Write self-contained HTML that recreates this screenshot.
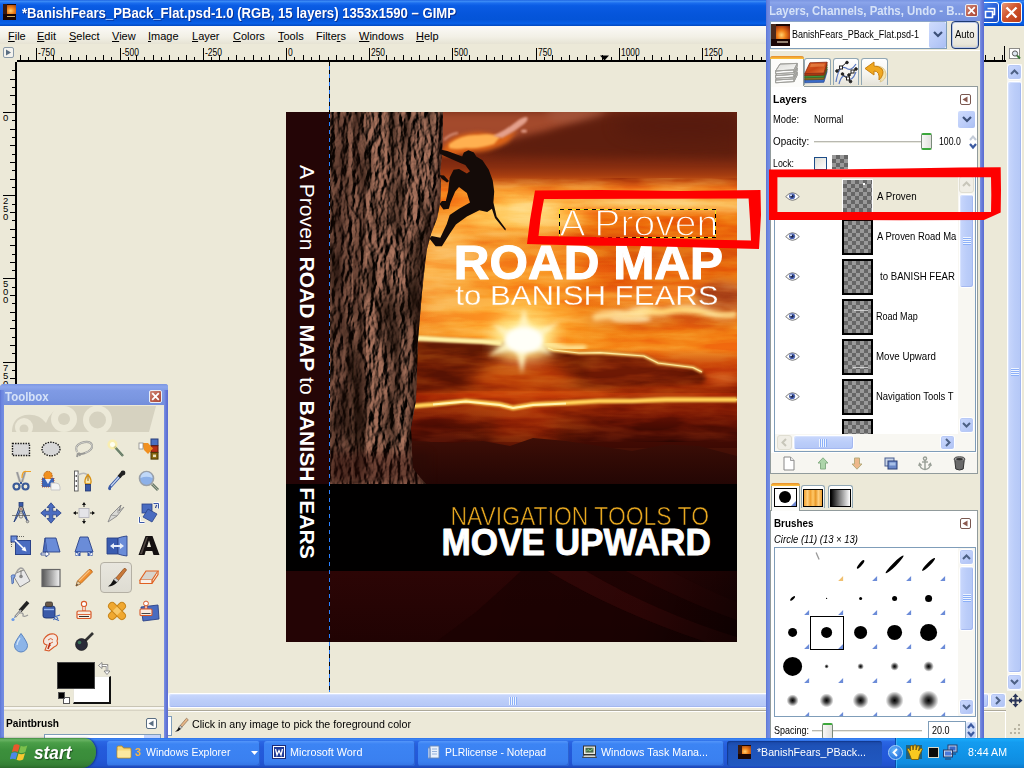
<!DOCTYPE html>
<html>
<head>
<meta charset="utf-8">
<title>GIMP</title>
<style>
*{box-sizing:border-box;margin:0;padding:0}
html,body{width:1024px;height:768px;overflow:hidden;background:#ECE9D8;font-family:"Liberation Sans",sans-serif;font-size:11px;color:#000}
#root{position:absolute;left:0;top:0;width:1024px;height:768px;overflow:hidden;background:#ECE9D8}
.abs{position:absolute}
.t{position:absolute;white-space:nowrap;line-height:1}
/* ---------- main title bar ---------- */
#mtitle{left:0;top:0;width:1024px;height:26px;background:linear-gradient(#1C62E0 0%,#3C8CF6 5%,#1A6CEE 12%,#0A5CE4 22%,#0656DC 50%,#0454D8 75%,#0860E8 90%,#0348BE 100%)}
#mtitle .t{left:22px;top:6px;color:#fff;font-weight:bold;font-size:14px;text-shadow:1px 1px 0 #0A2F8E}
/* ---------- menu bar ---------- */
#menubar{left:0;top:26px;width:766px;height:18px;background:linear-gradient(#FBFAF7,#F2F0E6 60%,#E6E3D4)}
#menubar .t{top:5px;font-size:11px}
#menubar u{text-decoration:underline}
/* ---------- rulers ---------- */
#hruler{left:17px;top:44px;width:990px;height:18px;background:#ECE9D8}
#vruler{left:0;top:62px;width:17px;height:631px;background:#ECE9D8}
/* ---------- canvas ---------- */
#canvas{left:17px;top:62px;width:990px;height:631px;background:#ECE9D8}

.sbtn{background:linear-gradient(135deg,#CCDAFD,#BACBF8 60%,#AEC2F4);border:1px solid #fff;border-radius:3px;box-shadow:inset 0 0 0 1px #B8C9F6}
.sthumb{border:1px solid #fff;border-radius:3px;box-shadow:inset -1px -1px 0 #A4B8F0, inset 1px 1px 0 #D6E2FE}
</style>
</head>
<body>
<div id="root">

<!-- MAIN WINDOW -->
<div id="mtitle" class="abs"><div class="t" style="transform:scaleX(0.9373);transform-origin:0 0">*BanishFears_PBack_Flat.psd-1.0 (RGB, 15 layers) 1353x1590 – GIMP</div></div>
<div id="menubar" class="abs">
  <div class="t" style="left:8px"><u>F</u>ile</div>
  <div class="t" style="left:37px"><u>E</u>dit</div>
  <div class="t" style="left:69px"><u>S</u>elect</div>
  <div class="t" style="left:112px"><u>V</u>iew</div>
  <div class="t" style="left:148px"><u>I</u>mage</div>
  <div class="t" style="left:192px"><u>L</u>ayer</div>
  <div class="t" style="left:233px"><u>C</u>olors</div>
  <div class="t" style="left:278px"><u>T</u>ools</div>
  <div class="t" style="left:316px">Filte<u>r</u>s</div>
  <div class="t" style="left:359px"><u>W</u>indows</div>
  <div class="t" style="left:416px"><u>H</u>elp</div>
</div>
<div id="hruler" class="abs"></div>
<div id="vruler" class="abs"></div>
<div id="canvas" class="abs"></div>

<!-- BOOK COVER -->
<svg class="abs" style="left:286px;top:112px" width="451" height="530" viewBox="0 0 451 530">
<defs>
  <linearGradient id="sky" x1="0" y1="0" x2="0" y2="372" gradientUnits="userSpaceOnUse">
    <stop offset="0" stop-color="#742A16"/>
    <stop offset="0.07" stop-color="#64200F"/>
    <stop offset="0.10" stop-color="#6A220E"/>
    <stop offset="0.129" stop-color="#7A2810"/>
    <stop offset="0.148" stop-color="#882E10"/>
    <stop offset="0.169" stop-color="#A43C10"/>
    <stop offset="0.188" stop-color="#C85412"/>
    <stop offset="0.202" stop-color="#EC7E1E"/>
    <stop offset="0.215" stop-color="#F68C22"/>
    <stop offset="0.25" stop-color="#F48016"/>
    <stop offset="0.30" stop-color="#EE700C"/>
    <stop offset="0.40" stop-color="#E6600A"/>
    <stop offset="0.50" stop-color="#E8640A"/>
    <stop offset="0.58" stop-color="#F07A10"/>
    <stop offset="0.64" stop-color="#F68618"/>
    <stop offset="0.70" stop-color="#D8580C"/>
    <stop offset="0.745" stop-color="#B44208"/>
    <stop offset="0.775" stop-color="#A83808"/>
    <stop offset="0.80" stop-color="#9A2E07"/>
    <stop offset="0.84" stop-color="#741E06"/>
    <stop offset="0.88" stop-color="#4E1206"/>
    <stop offset="1" stop-color="#2E0A06"/>
  </linearGradient>
  <linearGradient id="lowmul" x1="0" y1="236" x2="0" y2="336" gradientUnits="userSpaceOnUse">
    <stop offset="0" stop-color="#FFFFFF"/>
    <stop offset="0.12" stop-color="#E8B8A0"/>
    <stop offset="0.5" stop-color="#E0A088"/>
    <stop offset="1" stop-color="#D89078"/>
  </linearGradient>
  <linearGradient id="mtn" x1="0" y1="326" x2="0" y2="372" gradientUnits="userSpaceOnUse">
    <stop offset="0" stop-color="#3E0E06"/>
    <stop offset="0.5" stop-color="#300A05"/>
    <stop offset="1" stop-color="#240604"/>
  </linearGradient>
  <radialGradient id="sun" cx="238" cy="228" r="120" gradientUnits="userSpaceOnUse">
    <stop offset="0" stop-color="#FFFFF0"/>
    <stop offset="0.10" stop-color="#FFF6C0"/>
    <stop offset="0.18" stop-color="#FFD060" stop-opacity="0.95"/>
    <stop offset="0.4" stop-color="#FFA020" stop-opacity="0.55"/>
    <stop offset="1" stop-color="#F08010" stop-opacity="0"/>
  </radialGradient>
  <linearGradient id="low" x1="0" y1="459" x2="0" y2="530" gradientUnits="userSpaceOnUse">
    <stop offset="0" stop-color="#2C0505"/>
    <stop offset="1" stop-color="#200303"/>
  </linearGradient>
  <linearGradient id="lowshade" x1="200" y1="459" x2="451" y2="530" gradientUnits="userSpaceOnUse">
    <stop offset="0" stop-color="#000" stop-opacity="0"/>
    <stop offset="0.6" stop-color="#000" stop-opacity="0.1"/>
    <stop offset="1" stop-color="#000" stop-opacity="0.55"/>
  </linearGradient>
  <filter color-interpolation-filters="sRGB" id="b2" x="-20%" y="-20%" width="140%" height="140%"><feGaussianBlur stdDeviation="2"/></filter>
  <filter color-interpolation-filters="sRGB" id="b4" x="-20%" y="-50%" width="140%" height="200%"><feGaussianBlur stdDeviation="4"/></filter>
  <filter color-interpolation-filters="sRGB" id="b16" x="-30%" y="-50%" width="160%" height="200%"><feGaussianBlur stdDeviation="16"/></filter>
  <filter color-interpolation-filters="sRGB" id="b8" x="-20%" y="-50%" width="140%" height="200%"><feGaussianBlur stdDeviation="8"/></filter>
  <filter color-interpolation-filters="sRGB" id="b1" x="-5%" y="-50%" width="110%" height="200%"><feGaussianBlur stdDeviation="0.8"/></filter>
  <filter color-interpolation-filters="sRGB" id="rock" x="0" y="0" width="100%" height="100%">
    <feTurbulence type="fractalNoise" baseFrequency="0.17 0.07" numOctaves="5" seed="4" result="n"/>
    <feDiffuseLighting in="n" surfaceScale="4.6" diffuseConstant="1.32" lighting-color="#8E6250" result="lit">
      <feDistantLight azimuth="200" elevation="40"/>
    </feDiffuseLighting>
    <feTurbulence type="fractalNoise" baseFrequency="0.05 0.012" numOctaves="3" seed="9" result="n2"/>
    <feColorMatrix in="n2" type="matrix" values="0 0 0 0 0.08  0 0 0 0 0.04  0 0 0 0 0.02  2.2 0 0 0 -1.0" result="cr"/>
    <feMerge><feMergeNode in="lit"/><feMergeNode in="cr"/></feMerge>
    <feComposite in2="SourceGraphic" operator="in"/>
  </filter>
  <filter color-interpolation-filters="sRGB" id="skynoise" x="0" y="0" width="100%" height="100%">
    <feTurbulence type="fractalNoise" baseFrequency="0.014 0.075" numOctaves="4" seed="23" result="n"/>
    <feColorMatrix in="n" type="matrix" values="2.4 0 0 0 -0.7  2.4 0 0 0 -0.7  2.4 0 0 0 -0.7  0 0 0 0 1"/>
  </filter>
  <filter color-interpolation-filters="sRGB" id="thin"><feMorphology operator="erode" radius="0.45"/></filter>
  <clipPath id="skyclip"><rect x="43" y="0" width="408" height="372"/></clipPath>
  <clipPath id="rockclip"><path d="M43 0 L157 0 L156.7 28 L155.9 43 L154.3 59 L155 75 L154.3 90 L151.2 106 L145 122 L141 137 L139.5 148 L136 180 L132 228 L130 288 L125 316 L126 340 L127 356 L133 364 L140 372 L43 372Z"/></clipPath>
  <clipPath id="lowclip"><rect x="0" y="459" width="451" height="71"/></clipPath>
</defs>
<!-- spine -->
<rect x="0" y="0" width="451" height="530" fill="#240506"/>
<!-- sky -->
<g clip-path="url(#skyclip)">
  <rect x="43" y="0" width="408" height="372" fill="url(#sky)"/>
  <!-- top-left lighter haze -->
  <path d="M43 0 H330 L300 8 L258 22 L214 32 L150 40 L43 40Z" fill="#A64C2E" opacity="0.95" filter="url(#b4)"/>
  <ellipse cx="290" cy="2" rx="30" ry="10" fill="#A85A40" opacity="0.7" filter="url(#b4)"/>
  <!-- dark cloud mass from right -->
  <path d="M451 -4 L320 2 L262 20 L236 26 L214 34 L196 42 L451 46Z" fill="#5E1E0E" opacity="0.9" filter="url(#b4)"/>
  <ellipse cx="400" cy="14" rx="70" ry="14" fill="#54190E" opacity="0.7" filter="url(#b8)"/>
  <!-- top cloud streak -->
  <path d="M156 38 Q164 24 180 22 Q196 18 212 24 Q222 22 232 18 L222 30 Q206 40 186 40 Q170 44 156 44Z" fill="#DC6418" filter="url(#b2)"/>
  <path d="M163 32 Q176 22 192 23 Q206 21 214 25 L208 32 Q194 37 180 36 Q170 38 163 36Z" fill="#FFB050" filter="url(#b1)"/>
  <path d="M158 28 Q164 22 172 21" stroke="#D89078" stroke-width="2.2" fill="none" filter="url(#b1)"/>
  <path d="M207 24 Q220 18 230 10 Q236 5 241 5 Q243 8 238 12 Q228 20 216 26Z" fill="#E4A08C" filter="url(#b1)"/>
  <ellipse cx="238" cy="19" rx="3" ry="1.6" fill="#E4A08C" filter="url(#b1)"/>
  <!-- bright band -->
  <ellipse cx="235" cy="100" rx="70" ry="17" fill="#FFB640" opacity="0.95" filter="url(#b8)"/>
  <ellipse cx="225" cy="104" rx="40" ry="9" fill="#FFD070" opacity="0.8" filter="url(#b4)"/>
  <ellipse cx="160" cy="118" rx="36" ry="13" fill="#FFBC50" opacity="0.75" filter="url(#b8)"/>
  <ellipse cx="380" cy="92" rx="100" ry="6" fill="#FFD878" opacity="0.95" filter="url(#b4)"/>
  <ellipse cx="390" cy="142" rx="80" ry="6" fill="#D2500C" opacity="0.7" filter="url(#b4)"/>
  <ellipse cx="300" cy="126" rx="70" ry="5" fill="#DC5A0C" opacity="0.5" filter="url(#b4)"/>
  <ellipse cx="170" cy="160" rx="50" ry="12" fill="#FFA432" opacity="0.7" filter="url(#b8)"/>
  <ellipse cx="380" cy="184" rx="80" ry="9" fill="#FBA63C" opacity="0.75" filter="url(#b4)"/>
  <ellipse cx="300" cy="160" rx="120" ry="6" fill="#F88C20" opacity="0.5" filter="url(#b4)"/>
  <ellipse cx="195" cy="165" rx="105" ry="62" fill="#FFB440" opacity="0.55" filter="url(#b16)"/>
  <ellipse cx="160" cy="160" rx="30" ry="40" fill="#FFD070" opacity="0.5" filter="url(#b8)"/>
  <ellipse cx="215" cy="205" rx="80" ry="22" fill="#FFCC60" opacity="0.5" filter="url(#b8)"/>
  <ellipse cx="236" cy="104" rx="52" ry="20" fill="#FFCC60" opacity="0.75" filter="url(#b8)"/>
  <ellipse cx="250" cy="96" rx="28" ry="8" fill="#FFE090" opacity="0.6" filter="url(#b4)"/>
  <!-- right clouds near sun -->
  <ellipse cx="436" cy="186" rx="26" ry="17" fill="#B04A1E" opacity="0.85" filter="url(#b4)"/>
  <path d="M300 206 Q330 196 362 200 Q392 190 420 196 Q440 200 451 198 L451 214 Q420 216 392 212 Q360 218 330 214 Q312 216 300 212Z" fill="#D86C20" opacity="0.7" filter="url(#b4)"/>
  <path d="M306 203 Q320 196 340 199 Q356 192 376 196 Q398 190 420 197 Q438 202 451 199 L451 205 Q436 208 420 204 Q398 199 378 204 Q356 204 340 207 Q322 206 308 209Z" fill="#FFE090" filter="url(#b2)"/>
  <ellipse cx="345" cy="206" rx="20" ry="5" fill="#FFE8A8" opacity="0.8" filter="url(#b2)"/>
  <!-- sun glow -->
  <rect x="43" y="100" width="408" height="272" fill="url(#sun)"/>
  <!-- dark cloud band 1 (below rim path) -->
  <path d="M43 228 L132 226 L164 228 L197 229.5 L214 231 L238 226 L267 238 L293 241 L314 240.6 L358 244 L372 251 L407 255.5 L418 262 Q424 268 414 272 L330 275 L238 279 L130 279 L43 280Z" fill="#7C2806" filter="url(#b2)"/>
  <path d="M176 276 Q210 240 238 232 Q266 240 300 276 L238 288Z" fill="#F07A12" opacity="0.8" filter="url(#b8)"/>
  <path d="M300 246 L360 248 L400 258 L410 268 L300 272Z" fill="#A8400E" opacity="0.55" filter="url(#b4)"/>
  <ellipse cx="436" cy="266" rx="14" ry="7" fill="#F89838" opacity="0.7" filter="url(#b4)"/>
  <path d="M43 258 L130 256 L130 278 L43 278Z" fill="#6A2006" opacity="0.6" filter="url(#b8)"/>
  <!-- rim 1 -->
  <!-- glow band between clouds -->
  <path d="M43 288 Q240 280 451 283" stroke="#D8560C" stroke-width="5" fill="none" opacity="0.85" filter="url(#b2)"/>
  <path d="M170 284 Q240 279 320 282" stroke="#F07814" stroke-width="8" fill="none" opacity="0.8" filter="url(#b4)"/>
  <path d="M215 292 L262 292 L275 330 L205 330Z" fill="#D04A0A" opacity="0.45" filter="url(#b8)"/>
  <!-- rim 2 -->
  <rect x="43" y="66" width="408" height="264" filter="url(#skynoise)" style="mix-blend-mode:soft-light" opacity="0.42"/>
  <rect x="43" y="236" width="408" height="100" fill="url(#lowmul)" style="mix-blend-mode:multiply"/>
  <path d="M43 227 L132 226 L164 228 L197 229.5 L214 231" stroke="#FFEC98" stroke-width="3" fill="none" filter="url(#b1)"/>
  <path d="M43 227 L132 226 L164 228 L197 229.5 L214 231" stroke="#FFF8C8" stroke-width="1.4" fill="none" opacity="0.95"/>
  <path d="M258 232 L280 236 L300 236" stroke="#FFF0A8" stroke-width="5" fill="none" filter="url(#b2)"/>
  <path d="M262 236 L267 238 L293 241 L314 240.6 L358 244 L372 251 L407 255.5 L416 260" stroke="#FFD870" stroke-width="2.6" fill="none" filter="url(#b1)"/>
  <path d="M262 236 L267 238 L293 241 L314 240.6 L358 244 L372 251 L407 255.5 L416 260" stroke="#FFF0A8" stroke-width="1.2" fill="none" opacity="0.9"/>
  <path d="M43 295 L129 294 L147 292.5 L180 289 L214 292.5 L227 296 L247 292.5 L280 291 L313 289 L346 289 L380 287.6 L413 287.6 L451 287.6" stroke="#FFD468" stroke-width="3.2" fill="none" filter="url(#b1)"/>
  <path d="M43 295 L129 294 L147 292.5 L180 289 L214 292.5 L227 296 L247 292.5 L280 291 L313 289 L346 289 L380 287.6 L413 287.6 L451 287.6" stroke="#FFEFA0" stroke-width="1.3" fill="none" opacity="0.9"/>
  <path d="M43 295 L129 294 L147 292.5 L180 289 L214 292.5 L227 296 L247 292.5 L280 291 L313 289 L346 289 L380 287.6 L413 287.6 L451 287.6" stroke="#FFC848" stroke-width="4.6" fill="none" opacity="0.8" filter="url(#b1)"/>
  <path d="M147 292.5 L180 289.5 L214 293 L227 296 L247 293 L280 291.5" stroke="#FFF4B0" stroke-width="2" fill="none"/>
  <path d="M120 226 L164 228 L197 229.5 L216 231" stroke="#FFF0A0" stroke-width="5" fill="none" opacity="0.9" filter="url(#b1)"/>
  <!-- sun core -->
  <ellipse cx="238" cy="228" rx="30" ry="20" fill="#FFF0A0" opacity="0.9" filter="url(#b8)"/>
  <path d="M238 196 L245 220 L274 210 L252 228 L266 242 L241 237 L236 262 L230 237 L202 244 L223 228 L206 212 L231 221Z" fill="#FFF4C0" opacity="0.95" filter="url(#b2)"/>
  <ellipse cx="238" cy="228" rx="19" ry="13" fill="#FFFFF8" filter="url(#b2)"/>
  <!-- mountains -->
  <path d="M43 330 L127 329 L164 331 L197 329 L224 334 L247 326 L280 329 L313 334 L346 339 L380 332.5 L413 334 L451 344 L451 372 L43 372Z" fill="url(#mtn)"/>
</g>
<!-- rock -->
<g filter="url(#rock)">
  <path d="M43 0 L157 0 L156.7 28 L155.9 43 L154.3 59 L155 75 L154.3 90 L151.2 106 L145 122 L141 137 L139.5 148 L136 180 L132 228 L130 288 L125 316 L126 340 L127 356 L133 364 L140 372 L43 372Z" fill="#67402F"/>
</g>
<path d="M43 0 L157 0 L156.7 28 L155.9 43 L154.3 59 L155 75 L154.3 90 L151.2 106 L145 122 L141 137 L139.5 148 L136 180 L132 228 L130 288 L125 316 L126 340 L127 356 L133 364 L140 372 L43 372Z" fill="#200A04" opacity="0.10"/>
<g clip-path="url(#rockclip)"><path d="M72 0 Q66 30 74 60 Q82 95 74 130 Q66 170 74 210 Q80 260 72 372" stroke="#1C0C06" stroke-width="9" fill="none" opacity="0.55" filter="url(#b4)"/><rect x="43" y="0" width="22" height="372" fill="#1C0A06" opacity="0.35" filter="url(#b4)"/><path d="M157 0 L156.7 28 L155.9 43 L154.3 59 L155 75 L154.3 90 L151.2 106 L145 122 L141 137 L139.5 148 L136 180 L132 228 L130 288 L125 316 L126 340" stroke="#1A0A06" stroke-width="8" fill="none" opacity="0.5" filter="url(#b2)"/></g>
<rect x="43" y="340" width="100" height="32" fill="#2A0A06" opacity="0.45" filter="url(#b4)"/>
<!-- climber -->
<path d="M154.3 37.4 L161.3 38.9 L176.2 44.4 L177.8 40.5 L182.4 38.2 L187.9 40.5 L190.3 44.4 L196.5 48.3 L202.8 57.7 L206.7 68.6 L208.2 79.6 L207.4 90.5 L210.6 104.6 L219.9 117.1 L219.2 118.6 L209 106.1 L205.9 96.8 L201.2 99.9 L193.4 98.3 L180.9 104.6 L169.9 112.4 L163.7 121.8 L155.9 134.3 L149.6 134.3 L143.4 126.4 L145.7 124.1 L154.3 125.7 L160.6 112.4 L163.7 103 L173 96.8 L184 90.5 L180.9 81.1 L173 74.9 L169.2 79.6 L164.5 90.5 L162.9 96.8 L157.4 97.5 L153.5 92.1 L155.9 88.9 L159.8 88.9 L162.1 79.6 L163.7 65.5 L167.6 57.7 L173 56.9 L180.9 61.6 L184 59.3 L179.3 53 L173.8 50.7 L157.4 43.6 L153.5 41.3Z" fill="#140B08"/>
<path d="M153 63 L158 63.5 L163 69 L161 70.5 L156 67Z" fill="#140B08"/>
<!-- black band -->
<rect x="0" y="372" width="451" height="87" fill="#010000"/>
<!-- lower -->
<rect x="0" y="459" width="451" height="71" fill="url(#low)"/>
<g clip-path="url(#lowclip)">
  <path d="M150 530 L190 500 Q215 478 235 459 L262 459 Q330 500 420 530Z" fill="#1C0303" opacity="0.8"/>
  <path d="M262 459 L300 459 Q370 500 451 525 L451 530 L420 530 Q330 500 262 459Z" fill="#330707" opacity="0.8"/>
  <path d="M300 459 L340 459 Q400 490 451 508 L451 525 Q370 500 300 459Z" fill="#1E0303" opacity="0.8"/>
  <path d="M340 459 L385 459 Q420 478 451 490 L451 508 Q400 490 340 459Z" fill="#300606" opacity="0.8"/>
  <rect x="0" y="459" width="451" height="71" fill="url(#lowshade)"/>
</g>
<rect x="0" y="0" width="43" height="372" fill="#240506"/>
<rect x="0" y="459" width="43" height="71" fill="#240405"/>
<!-- text -->
<g font-family="Liberation Sans, sans-serif" fill="#fff">
  <mask id="mthin" maskUnits="userSpaceOnUse" x="260" y="85" width="190" height="55"><text x="273.60" y="124.4" font-size="37.2" textLength="158.55" lengthAdjust="spacingAndGlyphs" fill="#fff" stroke="#000" stroke-width="1.3">A Proven</text></mask>
  <rect x="260" y="85" width="190" height="55" fill="#fff" mask="url(#mthin)"/>
  <text x="167.80" y="166.6" font-size="47.5" font-weight="bold" textLength="269.23" lengthAdjust="spacingAndGlyphs" stroke="#fff" stroke-width="1.1" stroke-linejoin="round">ROAD MAP</text>
  <mask id="mthin2" maskUnits="userSpaceOnUse" x="160" y="165" width="285" height="40"><text x="169.30" y="193.2" font-size="27.6" textLength="263.23" lengthAdjust="spacingAndGlyphs" fill="#fff" stroke="#000" stroke-width="0.3">to BANISH FEARS</text></mask>
  <rect x="160" y="165" width="285" height="40" fill="#fff" mask="url(#mthin2)"/>
  <mask id="mthin3" maskUnits="userSpaceOnUse" x="155" y="388" width="280" height="32"><text x="164.40" y="412.9" font-size="25.2" textLength="258.64" lengthAdjust="spacingAndGlyphs" fill="#fff" stroke="#000" stroke-width="0.6">NAVIGATION TOOLS TO</text></mask>
  <rect x="155" y="388" width="280" height="32" fill="#E9A820" mask="url(#mthin3)"/>
  <text x="155.60" y="443.3" font-size="36.2" font-weight="bold" textLength="269.24" lengthAdjust="spacingAndGlyphs" stroke="#fff" stroke-width="0.9" stroke-linejoin="round">MOVE UPWARD</text>
  <g transform="translate(13.6,53.00) rotate(90)">
    <text x="0" y="0" font-size="21" textLength="393.80" lengthAdjust="spacingAndGlyphs">A Proven <tspan font-weight="bold">ROAD MAP</tspan> to <tspan font-weight="bold">BANISH FEARS</tspan></text>
  </g>
</g>
</svg>


<!-- guide -->
<div class="abs" style="left:329px;top:62px;width:1px;height:630px;background:repeating-linear-gradient(#000 0,#000 4px,#2A80FF 4px,#2A80FF 8px)"></div>
<!-- text layer outline -->
<svg class="abs" style="left:558px;top:208px" width="160" height="32" viewBox="558 208 160 32" shape-rendering="crispEdges">
  <rect x="559.5" y="209.5" width="156" height="28" fill="none" stroke="#F0E020" stroke-width="1"/>
  <rect x="559.5" y="209.5" width="156" height="28" fill="none" stroke="#000" stroke-width="1" stroke-dasharray="4 4"/>
</svg>

<!-- RIGHT SCROLLBAR / BOTTOM -->
<svg class="abs" style="left:0;top:44px" width="1024" height="18" viewBox="0 44 1024 18" shape-rendering="crispEdges">
<rect x="17" y="60" width="989" height="2" fill="#000"/>
<rect x="1004" y="46" width="1" height="15" fill="#000"/>
<rect x="20" y="55" width="1" height="5" fill="#000"/>
<rect x="28" y="57" width="1" height="3" fill="#000"/>
<rect x="36" y="48" width="1" height="12" fill="#000"/>
<rect x="45" y="57" width="1" height="3" fill="#000"/>
<rect x="53" y="55" width="1" height="5" fill="#000"/>
<rect x="61" y="57" width="1" height="3" fill="#000"/>
<rect x="70" y="55" width="1" height="5" fill="#000"/>
<rect x="78" y="57" width="1" height="3" fill="#000"/>
<rect x="86" y="55" width="1" height="5" fill="#000"/>
<rect x="95" y="57" width="1" height="3" fill="#000"/>
<rect x="103" y="55" width="1" height="5" fill="#000"/>
<rect x="111" y="57" width="1" height="3" fill="#000"/>
<rect x="120" y="48" width="1" height="12" fill="#000"/>
<rect x="128" y="57" width="1" height="3" fill="#000"/>
<rect x="136" y="55" width="1" height="5" fill="#000"/>
<rect x="144" y="57" width="1" height="3" fill="#000"/>
<rect x="153" y="55" width="1" height="5" fill="#000"/>
<rect x="161" y="57" width="1" height="3" fill="#000"/>
<rect x="169" y="55" width="1" height="5" fill="#000"/>
<rect x="178" y="57" width="1" height="3" fill="#000"/>
<rect x="186" y="55" width="1" height="5" fill="#000"/>
<rect x="194" y="57" width="1" height="3" fill="#000"/>
<rect x="203" y="48" width="1" height="12" fill="#000"/>
<rect x="211" y="57" width="1" height="3" fill="#000"/>
<rect x="219" y="55" width="1" height="5" fill="#000"/>
<rect x="228" y="57" width="1" height="3" fill="#000"/>
<rect x="236" y="55" width="1" height="5" fill="#000"/>
<rect x="244" y="57" width="1" height="3" fill="#000"/>
<rect x="253" y="55" width="1" height="5" fill="#000"/>
<rect x="261" y="57" width="1" height="3" fill="#000"/>
<rect x="269" y="55" width="1" height="5" fill="#000"/>
<rect x="278" y="57" width="1" height="3" fill="#000"/>
<rect x="286" y="48" width="1" height="12" fill="#000"/>
<rect x="294" y="57" width="1" height="3" fill="#000"/>
<rect x="303" y="55" width="1" height="5" fill="#000"/>
<rect x="311" y="57" width="1" height="3" fill="#000"/>
<rect x="319" y="55" width="1" height="5" fill="#000"/>
<rect x="328" y="57" width="1" height="3" fill="#000"/>
<rect x="336" y="55" width="1" height="5" fill="#000"/>
<rect x="344" y="57" width="1" height="3" fill="#000"/>
<rect x="353" y="55" width="1" height="5" fill="#000"/>
<rect x="361" y="57" width="1" height="3" fill="#000"/>
<rect x="369" y="48" width="1" height="12" fill="#000"/>
<rect x="378" y="57" width="1" height="3" fill="#000"/>
<rect x="386" y="55" width="1" height="5" fill="#000"/>
<rect x="394" y="57" width="1" height="3" fill="#000"/>
<rect x="403" y="55" width="1" height="5" fill="#000"/>
<rect x="411" y="57" width="1" height="3" fill="#000"/>
<rect x="419" y="55" width="1" height="5" fill="#000"/>
<rect x="428" y="57" width="1" height="3" fill="#000"/>
<rect x="436" y="55" width="1" height="5" fill="#000"/>
<rect x="444" y="57" width="1" height="3" fill="#000"/>
<rect x="452" y="48" width="1" height="12" fill="#000"/>
<rect x="461" y="57" width="1" height="3" fill="#000"/>
<rect x="469" y="55" width="1" height="5" fill="#000"/>
<rect x="477" y="57" width="1" height="3" fill="#000"/>
<rect x="486" y="55" width="1" height="5" fill="#000"/>
<rect x="494" y="57" width="1" height="3" fill="#000"/>
<rect x="502" y="55" width="1" height="5" fill="#000"/>
<rect x="511" y="57" width="1" height="3" fill="#000"/>
<rect x="519" y="55" width="1" height="5" fill="#000"/>
<rect x="527" y="57" width="1" height="3" fill="#000"/>
<rect x="536" y="48" width="1" height="12" fill="#000"/>
<rect x="544" y="57" width="1" height="3" fill="#000"/>
<rect x="552" y="55" width="1" height="5" fill="#000"/>
<rect x="561" y="57" width="1" height="3" fill="#000"/>
<rect x="569" y="55" width="1" height="5" fill="#000"/>
<rect x="577" y="57" width="1" height="3" fill="#000"/>
<rect x="586" y="55" width="1" height="5" fill="#000"/>
<rect x="594" y="57" width="1" height="3" fill="#000"/>
<rect x="602" y="55" width="1" height="5" fill="#000"/>
<rect x="611" y="57" width="1" height="3" fill="#000"/>
<rect x="619" y="48" width="1" height="12" fill="#000"/>
<rect x="627" y="57" width="1" height="3" fill="#000"/>
<rect x="636" y="55" width="1" height="5" fill="#000"/>
<rect x="644" y="57" width="1" height="3" fill="#000"/>
<rect x="652" y="55" width="1" height="5" fill="#000"/>
<rect x="661" y="57" width="1" height="3" fill="#000"/>
<rect x="669" y="55" width="1" height="5" fill="#000"/>
<rect x="677" y="57" width="1" height="3" fill="#000"/>
<rect x="686" y="55" width="1" height="5" fill="#000"/>
<rect x="694" y="57" width="1" height="3" fill="#000"/>
<rect x="702" y="48" width="1" height="12" fill="#000"/>
<rect x="711" y="57" width="1" height="3" fill="#000"/>
<rect x="719" y="55" width="1" height="5" fill="#000"/>
<rect x="727" y="57" width="1" height="3" fill="#000"/>
<rect x="736" y="55" width="1" height="5" fill="#000"/>
<rect x="744" y="57" width="1" height="3" fill="#000"/>
<rect x="752" y="55" width="1" height="5" fill="#000"/>
<rect x="761" y="57" width="1" height="3" fill="#000"/>
<rect x="769" y="55" width="1" height="5" fill="#000"/>
<rect x="777" y="57" width="1" height="3" fill="#000"/>
<rect x="786" y="48" width="1" height="12" fill="#000"/>
<rect x="794" y="57" width="1" height="3" fill="#000"/>
<rect x="802" y="55" width="1" height="5" fill="#000"/>
<rect x="810" y="57" width="1" height="3" fill="#000"/>
<rect x="819" y="55" width="1" height="5" fill="#000"/>
<rect x="827" y="57" width="1" height="3" fill="#000"/>
<rect x="835" y="55" width="1" height="5" fill="#000"/>
<rect x="844" y="57" width="1" height="3" fill="#000"/>
<rect x="852" y="55" width="1" height="5" fill="#000"/>
<rect x="860" y="57" width="1" height="3" fill="#000"/>
<rect x="869" y="48" width="1" height="12" fill="#000"/>
<rect x="877" y="57" width="1" height="3" fill="#000"/>
<rect x="885" y="55" width="1" height="5" fill="#000"/>
<rect x="894" y="57" width="1" height="3" fill="#000"/>
<rect x="902" y="55" width="1" height="5" fill="#000"/>
<rect x="910" y="57" width="1" height="3" fill="#000"/>
<rect x="919" y="55" width="1" height="5" fill="#000"/>
<rect x="927" y="57" width="1" height="3" fill="#000"/>
<rect x="935" y="55" width="1" height="5" fill="#000"/>
<rect x="944" y="57" width="1" height="3" fill="#000"/>
<rect x="952" y="48" width="1" height="12" fill="#000"/>
<rect x="960" y="57" width="1" height="3" fill="#000"/>
<rect x="969" y="55" width="1" height="5" fill="#000"/>
<rect x="977" y="57" width="1" height="3" fill="#000"/>
<rect x="985" y="55" width="1" height="5" fill="#000"/>
<rect x="994" y="57" width="1" height="3" fill="#000"/>
<rect x="1002" y="55" width="1" height="5" fill="#000"/>
<g font-family="Liberation Sans, sans-serif" font-size="10" fill="#000" shape-rendering="auto">
<text x="38.0" y="56.3" textLength="17.0" lengthAdjust="spacingAndGlyphs">-750</text>
<text x="122.0" y="56.3" textLength="17.0" lengthAdjust="spacingAndGlyphs">-500</text>
<text x="205.0" y="56.3" textLength="17.0" lengthAdjust="spacingAndGlyphs">-250</text>
<text x="288.0" y="56.3" textLength="4.7" lengthAdjust="spacingAndGlyphs">0</text>
<text x="371.0" y="56.3" textLength="14.0" lengthAdjust="spacingAndGlyphs">250</text>
<text x="454.0" y="56.3" textLength="14.0" lengthAdjust="spacingAndGlyphs">500</text>
<text x="538.0" y="56.3" textLength="14.0" lengthAdjust="spacingAndGlyphs">750</text>
<text x="621.0" y="56.3" textLength="18.6" lengthAdjust="spacingAndGlyphs">1000</text>
<text x="704.0" y="56.3" textLength="18.6" lengthAdjust="spacingAndGlyphs">1250</text>
<text x="788.0" y="56.3" textLength="18.6" lengthAdjust="spacingAndGlyphs">1500</text>
<text x="871.0" y="56.3" textLength="18.6" lengthAdjust="spacingAndGlyphs">1750</text>
<text x="954.0" y="56.3" textLength="18.6" lengthAdjust="spacingAndGlyphs">2000</text>
</g>
<path d="M600 55.5 L609 55.5 L604.5 60.5Z" fill="#000" shape-rendering="geometricPrecision"/>
</svg>
<svg class="abs" style="left:0;top:62px" width="17" height="631" viewBox="0 62 17 631" shape-rendering="crispEdges">
<rect x="15" y="62" width="2" height="631" fill="#000"/>
<rect x="12" y="70" width="3" height="1" fill="#000"/>
<rect x="10" y="79" width="5" height="1" fill="#000"/>
<rect x="12" y="87" width="3" height="1" fill="#000"/>
<rect x="10" y="95" width="5" height="1" fill="#000"/>
<rect x="12" y="104" width="3" height="1" fill="#000"/>
<rect x="3" y="112" width="12" height="1" fill="#000"/>
<rect x="12" y="120" width="3" height="1" fill="#000"/>
<rect x="10" y="129" width="5" height="1" fill="#000"/>
<rect x="12" y="137" width="3" height="1" fill="#000"/>
<rect x="10" y="145" width="5" height="1" fill="#000"/>
<rect x="12" y="154" width="3" height="1" fill="#000"/>
<rect x="10" y="162" width="5" height="1" fill="#000"/>
<rect x="12" y="170" width="3" height="1" fill="#000"/>
<rect x="10" y="179" width="5" height="1" fill="#000"/>
<rect x="12" y="187" width="3" height="1" fill="#000"/>
<rect x="3" y="195" width="12" height="1" fill="#000"/>
<rect x="12" y="204" width="3" height="1" fill="#000"/>
<rect x="10" y="212" width="5" height="1" fill="#000"/>
<rect x="12" y="220" width="3" height="1" fill="#000"/>
<rect x="10" y="229" width="5" height="1" fill="#000"/>
<rect x="12" y="237" width="3" height="1" fill="#000"/>
<rect x="10" y="245" width="5" height="1" fill="#000"/>
<rect x="12" y="254" width="3" height="1" fill="#000"/>
<rect x="10" y="262" width="5" height="1" fill="#000"/>
<rect x="12" y="270" width="3" height="1" fill="#000"/>
<rect x="3" y="278" width="12" height="1" fill="#000"/>
<rect x="12" y="287" width="3" height="1" fill="#000"/>
<rect x="10" y="295" width="5" height="1" fill="#000"/>
<rect x="12" y="303" width="3" height="1" fill="#000"/>
<rect x="10" y="312" width="5" height="1" fill="#000"/>
<rect x="12" y="320" width="3" height="1" fill="#000"/>
<rect x="10" y="328" width="5" height="1" fill="#000"/>
<rect x="12" y="337" width="3" height="1" fill="#000"/>
<rect x="10" y="345" width="5" height="1" fill="#000"/>
<rect x="12" y="353" width="3" height="1" fill="#000"/>
<rect x="3" y="362" width="12" height="1" fill="#000"/>
<rect x="12" y="370" width="3" height="1" fill="#000"/>
<rect x="10" y="378" width="5" height="1" fill="#000"/>
<rect x="12" y="387" width="3" height="1" fill="#000"/>
<rect x="10" y="395" width="5" height="1" fill="#000"/>
<rect x="12" y="403" width="3" height="1" fill="#000"/>
<rect x="10" y="412" width="5" height="1" fill="#000"/>
<rect x="12" y="420" width="3" height="1" fill="#000"/>
<rect x="10" y="428" width="5" height="1" fill="#000"/>
<rect x="12" y="437" width="3" height="1" fill="#000"/>
<rect x="3" y="445" width="12" height="1" fill="#000"/>
<rect x="12" y="453" width="3" height="1" fill="#000"/>
<rect x="10" y="462" width="5" height="1" fill="#000"/>
<rect x="12" y="470" width="3" height="1" fill="#000"/>
<rect x="10" y="478" width="5" height="1" fill="#000"/>
<rect x="12" y="487" width="3" height="1" fill="#000"/>
<rect x="10" y="495" width="5" height="1" fill="#000"/>
<rect x="12" y="503" width="3" height="1" fill="#000"/>
<rect x="10" y="512" width="5" height="1" fill="#000"/>
<rect x="12" y="520" width="3" height="1" fill="#000"/>
<rect x="3" y="528" width="12" height="1" fill="#000"/>
<rect x="12" y="537" width="3" height="1" fill="#000"/>
<rect x="10" y="545" width="5" height="1" fill="#000"/>
<rect x="12" y="553" width="3" height="1" fill="#000"/>
<rect x="10" y="562" width="5" height="1" fill="#000"/>
<rect x="12" y="570" width="3" height="1" fill="#000"/>
<rect x="10" y="578" width="5" height="1" fill="#000"/>
<rect x="12" y="587" width="3" height="1" fill="#000"/>
<rect x="10" y="595" width="5" height="1" fill="#000"/>
<rect x="12" y="603" width="3" height="1" fill="#000"/>
<rect x="3" y="612" width="12" height="1" fill="#000"/>
<rect x="12" y="620" width="3" height="1" fill="#000"/>
<rect x="10" y="628" width="5" height="1" fill="#000"/>
<rect x="12" y="636" width="3" height="1" fill="#000"/>
<rect x="10" y="645" width="5" height="1" fill="#000"/>
<rect x="12" y="653" width="3" height="1" fill="#000"/>
<rect x="10" y="661" width="5" height="1" fill="#000"/>
<rect x="12" y="670" width="3" height="1" fill="#000"/>
<rect x="10" y="678" width="5" height="1" fill="#000"/>
<rect x="12" y="686" width="3" height="1" fill="#000"/>
<g font-family="Liberation Sans, sans-serif" font-size="9.5" fill="#000" shape-rendering="auto">
<text x="3" y="121">0</text>
<text x="3" y="204">2</text>
<text x="3" y="212">5</text>
<text x="3" y="220">0</text>
<text x="3" y="287">5</text>
<text x="3" y="295">0</text>
<text x="3" y="303">0</text>
<text x="3" y="371">7</text>
<text x="3" y="379">5</text>
<text x="3" y="387">0</text>
<text x="3" y="454">1</text>
<text x="3" y="462">0</text>
<text x="3" y="470">0</text>
<text x="3" y="478">0</text>
<text x="3" y="537">1</text>
<text x="3" y="545">2</text>
<text x="3" y="553">5</text>
<text x="3" y="561">0</text>
<text x="3" y="621">1</text>
<text x="3" y="629">5</text>
<text x="3" y="637">0</text>
<text x="3" y="645">0</text>
</g>
</svg>
<!-- top-left ruler corner button -->
<div class="abs" style="left:3px;top:47px;width:11px;height:11px;border:1px solid #8A9AA8;border-radius:2px;background:#F4F3EE"></div>
<svg class="abs" style="left:5px;top:49px" width="7" height="7" viewBox="0 0 7 7"><path d="M1 0.5 L6 3.5 L1 6.5Z" fill="#5A6E82"/></svg>
<!-- zoom-on-resize button top right -->
<svg class="abs" style="left:1008px;top:46px" width="15" height="15" viewBox="0 0 15 15">
  <rect x="1.5" y="2.5" width="10" height="10" fill="#fff" stroke="#222" stroke-width="1" stroke-dasharray="1 1"/>
  <circle cx="7" cy="7.5" r="2.6" fill="#DDE6F0" stroke="#555" stroke-width="1"/>
  <path d="M9 9.5 L12 12.5" stroke="#3A7A3A" stroke-width="2"/>
</svg>
<!-- vertical scrollbar -->
<div class="abs" style="left:1007px;top:64px;width:15px;height:627px;background:#F6F5F0"></div>
<div class="abs sbtn" style="left:1007px;top:64px;width:15px;height:16px"></div>
<svg class="abs" style="left:1010px;top:69px" width="9" height="6" viewBox="0 0 9 6"><path d="M1 5 L4.5 1.5 L8 5" stroke="#4D6185" stroke-width="2" fill="none"/></svg>
<div class="abs sthumb" style="left:1007px;top:81px;width:15px;height:592px;background:linear-gradient(90deg,#C9D7FC,#BBCDF9 50%,#B4C7F6)"></div>
<div class="abs sbtn" style="left:1007px;top:674px;width:15px;height:16px"></div>
<svg class="abs" style="left:1010px;top:679px" width="9" height="6" viewBox="0 0 9 6"><path d="M1 1 L4.5 4.5 L8 1" stroke="#4D6185" stroke-width="2" fill="none"/></svg>
<svg class="abs" style="left:1011px;top:368px" width="8" height="9" viewBox="0 0 8 9"><path d="M0 0.5H8M0 2.5H8M0 4.5H8M0 6.5H8" stroke="#EEF4FE" stroke-width="1"/><path d="M0 1.5H8M0 3.5H8M0 5.5H8M0 7.5H8" stroke="#8CB0F8" stroke-width="1"/></svg>
<!-- horizontal scrollbar -->
<div class="abs" style="left:168px;top:693px;width:838px;height:15px;background:#F6F5F0"></div>
<div class="abs sthumb" style="left:168px;top:693px;width:821px;height:15px;background:linear-gradient(#C9D7FC,#BBCDF9 50%,#B4C7F6)"></div>
<div class="abs sbtn" style="left:990px;top:693px;width:16px;height:15px"></div>
<svg class="abs" style="left:995px;top:696px" width="6" height="9" viewBox="0 0 6 9"><path d="M1 1 L4.5 4.5 L1 8" stroke="#4D6185" stroke-width="2" fill="none"/></svg>
<svg class="abs" style="left:509px;top:697px" width="9" height="8" viewBox="0 0 9 8"><path d="M0.5 0V8M2.5 0V8M4.5 0V8M6.5 0V8" stroke="#EEF4FE" stroke-width="1"/><path d="M1.5 0V8M3.5 0V8M5.5 0V8M7.5 0V8" stroke="#8CB0F8" stroke-width="1"/></svg>
<!-- nav cross -->
<svg class="abs" style="left:1008px;top:693px" width="15" height="15" viewBox="0 0 15 15"><path d="M7.5 0.5 L10.5 4 H8.5 V6.5 H11 V4.5 L14.5 7.5 L11 10.5 V8.5 H8.5 V11 H10.5 L7.5 14.5 L4.5 11 H6.5 V8.5 H4 V10.5 L0.5 7.5 L4 4.5 V6.5 H6.5 V4 H4.5Z" fill="#2A3558"/></svg>


<!-- status bar -->
<div class="abs" style="left:168px;top:708px;width:856px;height:30px;background:#ECE9D8"></div>
<div class="abs" style="left:168px;top:710px;width:838px;height:1px;background:#ACA899"></div>
<div class="abs" style="left:168px;top:711px;width:838px;height:1px;background:#fff"></div>
<div class="abs" style="left:1005px;top:711px;width:1px;height:27px;background:#fff"></div>
<svg class="abs" style="left:174px;top:717px" width="16" height="16" viewBox="0 0 16 16">
  <path d="M12.5 1.2 L14.3 2.8 L8 10 L6.2 8.6Z" fill="#E8B888" stroke="#7A5A40" stroke-width="0.6"/>
  <path d="M6.2 8.4 L8.2 10 L6.5 12 L4.6 10.4Z" fill="#C8C8C8" stroke="#555" stroke-width="0.5"/>
  <path d="M4.8 10.2 L6.8 12 Q5 14.5 1 14.8 Q3.5 13 4.8 10.2Z" fill="#111"/>
</svg>
<div class="t" style="left:192px;top:719px;font-size:11px;transform:scaleX(0.9706);transform-origin:0 0">Click in any image to pick the foreground color</div>
<!-- resize grip -->
<svg class="abs" style="left:1009px;top:723px" width="13" height="13" viewBox="0 0 13 13"><g fill="#B8B4A2"><rect x="9" y="1" width="2" height="2"/><rect x="5" y="5" width="2" height="2"/><rect x="9" y="5" width="2" height="2"/><rect x="1" y="9" width="2" height="2"/><rect x="5" y="9" width="2" height="2"/><rect x="9" y="9" width="2" height="2"/></g></svg>

<div class="abs" style="left:166px;top:716px;width:6px;height:20px;background:#fff;border:1px solid #7F9DB9"></div>

<!-- main title icon -->
<div class="abs" style="left:3px;top:4px;width:13px;height:16px;background:#1A0604;overflow:hidden"><div class="abs" style="left:1px;top:1px;width:12px;height:9px;background:radial-gradient(ellipse at 55% 65%,#FFD070 0%,#F08018 40%,#8A3010 100%)"></div><div class="abs" style="left:0;top:0;width:4px;height:10px;background:#3A1A10"></div><div class="abs" style="left:4px;top:12px;width:8px;height:1px;background:#C8A860"></div></div>
<!-- main window buttons (right of dock) -->
<div class="abs" style="left:978px;top:2px;width:21px;height:21px;border:1px solid #fff;border-radius:3px;background:linear-gradient(135deg,#5A94F4,#2A62D8 50%,#1C4CC0)"></div>
<svg class="abs" style="left:984px;top:7px" width="12" height="12" viewBox="0 0 12 12"><path d="M3.5 1.5 H10.5 V7.5 H8.5 M1.5 4.5 H8.5 V10.5 H1.5Z" fill="none" stroke="#fff" stroke-width="1.6"/></svg>
<div class="abs" style="left:1001px;top:2px;width:21px;height:21px;border:1px solid #fff;border-radius:3px;background:linear-gradient(135deg,#E89878,#D0542C 45%,#B83A18)"></div>
<svg class="abs" style="left:1005px;top:6px" width="13" height="13" viewBox="0 0 13 13"><path d="M1.5 1.5 L11.5 11.5 M11.5 1.5 L1.5 11.5" stroke="#fff" stroke-width="2.4"/></svg>

<!-- DOCK -->
<div id="dock" class="abs" style="left:766px;top:0;width:218px;height:738px;background:#ECE9D8"></div>
<div class="abs" style="left:766px;top:0;width:218px;height:21px;background:linear-gradient(#7B96E2 0%,#8AA4EA 12%,#7F9AE4 30%,#7A96E0 70%,#7590DE 100%)"></div>
<div class="t" style="left:769.0px;top:4.0px;font-size:13px;font-weight:bold;color:#D6E2F8;transform:scaleX(0.8764);transform-origin:0 0">Layers, Channels, Paths, Undo - B...</div>
<div class="abs" style="left:766px;top:0;width:4px;height:738px;background:linear-gradient(90deg,#5C74D4,#6C86E0 40%,#748EE2)"></div>
<div class="abs" style="left:980px;top:0;width:4px;height:738px;background:linear-gradient(90deg,#7C93E2,#6578D8 50%,#5A6CD0)"></div>
<div class="abs" style="left:965px;top:4px;width:13px;height:13px;border-radius:2px;border:1px solid #E8EEF8;background:linear-gradient(135deg,#D08878,#B85A48 60%,#A84838)"></div>
<svg class="abs" style="left:967px;top:6px" width="9" height="9" viewBox="0 0 9 9"><path d="M1.2 1.2 L7.8 7.8 M7.8 1.2 L1.2 7.8" stroke="#fff" stroke-width="1.8"/></svg>
<div class="abs" style="left:770px;top:21px;width:177px;height:28px;background:#fff;border:1px solid #7F9DB9;border-top-color:#8DA6C8"></div>
<div class="abs" style="left:771px;top:24px;width:19px;height:22px;background:#1A0604;overflow:hidden"><div class="abs" style="left:2px;top:2px;width:17px;height:13px;background:radial-gradient(ellipse at 50% 70%,#FFD070 0%,#F08018 35%,#B04010 70%,#5A1808 100%)"></div><div class="abs" style="left:0;top:0;width:5px;height:15px;background:#4A2A1C"></div><div class="abs" style="left:6px;top:17px;width:11px;height:2px;background:#C8B8A0;opacity:.7"></div></div>
<div class="t" style="left:791.6px;top:28.5px;font-size:11px;transform:scaleX(0.8210);transform-origin:0 0">BanishFears_PBack_Flat.psd-1</div>
<div class="abs" style="left:929px;top:22px;width:17px;height:26px;background:linear-gradient(135deg,#CFDCFD,#BCCDF9 55%,#A9BEF3);border-radius:2px"></div>
<svg class="abs" style="left:933px;top:31px" width="10" height="7" viewBox="0 0 10 7"><path d="M1 1 L5 5 L9 1" stroke="#3C5078" stroke-width="2.2" fill="none"/></svg>
<div class="abs" style="left:951px;top:21px;width:28px;height:28px;border:1px solid #1E3A72;border-radius:4px;background:linear-gradient(#F6F5F0,#E8E6DA 85%,#D8D4C4);box-shadow:inset 0 0 0 1px #B8C6E8"></div>
<div class="t" style="left:955.0px;top:28.5px;font-size:11px;transform:scaleX(0.8613);transform-origin:0 0">Auto</div>
<div class="abs" style="left:770px;top:50px;width:210px;height:1px;background:#fff"></div>
<div class="abs" style="left:770px;top:56px;width:34px;height:32px;background:#FCFCFA;border:1px solid #919B9C;border-bottom:none;border-radius:3px 3px 0 0"></div>
<div class="abs" style="left:770px;top:56px;width:34px;height:3px;background:linear-gradient(#E68B2C,#FFC73C);border-radius:3px 3px 0 0"></div>
<div class="abs" style="left:804px;top:58px;width:27px;height:27px;background:linear-gradient(#FFFFFF,#F4F3EE 60%,#E6E4DA);border:1px solid #91A7B4;border-bottom:none;border-radius:3px 3px 0 0"></div>
<div class="abs" style="left:833px;top:58px;width:26px;height:27px;background:linear-gradient(#FFFFFF,#F4F3EE 60%,#E6E4DA);border:1px solid #91A7B4;border-bottom:none;border-radius:3px 3px 0 0"></div>
<div class="abs" style="left:861px;top:58px;width:27px;height:27px;background:linear-gradient(#FFFFFF,#F4F3EE 60%,#E6E4DA);border:1px solid #91A7B4;border-bottom:none;border-radius:3px 3px 0 0"></div>
<svg class="abs" style="left:773px;top:62px" width="28" height="22" viewBox="0 0 28 22"><defs><linearGradient id="lyg" x1="0" y1="0" x2="1" y2="1"><stop offset="0" stop-color="#DCDCD8"/><stop offset="1" stop-color="#F8F8F6"/></linearGradient></defs><g stroke="#9E9E9A" stroke-width="0.9" stroke-linejoin="round"><path d="M2.6 18.0 L21 16.8 L21 19.6 L2.6 20.8Z" fill="#FBFBFA"/><path d="M21 16.8 L24.2 10.4 L24.2 13.2 L21 19.6Z" fill="#E8E8E4"/><path d="M7 11.0 L24.2 10.4 L21 16.8 L2.6 18.0Z" fill="#F6F6F4"/><path d="M7 11.0 L24.2 10.4 L24.2 13.2 L21 19.6 L2.6 20.8 L2.6 18.0Z M2.6 18.0 L21 16.8 L24.2 10.4 M21 16.8 V19.6" fill="none"/><path d="M2.6 13.5 L21 12.3 L21 15.1 L2.6 16.3Z" fill="#FBFBFA"/><path d="M21 12.3 L24.2 5.9 L24.2 8.7 L21 15.1Z" fill="#E8E8E4"/><path d="M7 6.5 L24.2 5.9 L21 12.3 L2.6 13.5Z" fill="#F6F6F4"/><path d="M7 6.5 L24.2 5.9 L24.2 8.7 L21 15.1 L2.6 16.3 L2.6 13.5Z M2.6 13.5 L21 12.3 L24.2 5.9 M21 12.3 V15.1" fill="none"/><path d="M2.6 9.0 L21 7.8 L21 10.6 L2.6 11.8Z" fill="#FBFBFA"/><path d="M21 7.8 L24.2 1.4 L24.2 4.2 L21 10.6Z" fill="#E8E8E4"/><path d="M7 2.0 L24.2 1.4 L21 7.8 L2.6 9.0Z" fill="url(#lyg)"/><path d="M7 2.0 L24.2 1.4 L24.2 4.2 L21 10.6 L2.6 11.8 L2.6 9.0Z M2.6 9.0 L21 7.8 L24.2 1.4 M21 7.8 V10.6" fill="none"/></g></svg>
<svg class="abs" style="left:803px;top:60px" width="26" height="25" viewBox="0 0 26 25"><defs><linearGradient id="chg" x1="0" y1="0" x2="1" y2="1"><stop offset="0" stop-color="#E06A28"/><stop offset="0.5" stop-color="#C84414"/><stop offset="1" stop-color="#E88040"/></linearGradient></defs><path d="M1.8 19.5 L20.9 19 L24 9 L24 12 L20.9 22.3 L1.8 22.8Z" fill="#3A6AC8" stroke="#23468E" stroke-width="0.7"/><path d="M1.8 17.6 L20.9 17 L24 7 L24 9.4 L20.9 19.4 L1.8 19.9Z" fill="#8A6A22" stroke="#5A4410" stroke-width="0.6"/><path d="M1.8 15.4 L20.9 14.8 L24 4.6 L24 7 L20.9 17.2 L1.8 17.8Z" fill="#3E963C" stroke="#246224" stroke-width="0.6"/><path d="M1.8 13.6 L20.9 13 L24 2.2 L24 4.8 L20.9 15.2 L1.8 15.8Z" fill="#A83810" stroke="#7A2408" stroke-width="0.6"/><path d="M6.9 2.8 L24 2.2 L20.9 13 L1.8 13.6Z" fill="url(#chg)" stroke="#8A2810" stroke-width="0.8"/><path d="M8 4 L22 3.5 L21 6.5 L7 7Z" fill="#F09858" opacity="0.55"/></svg>
<svg class="abs" style="left:834px;top:60px" width="25" height="25" viewBox="0 0 25 25"><g fill="none" stroke="#5A78C0" stroke-width="1.2"><path d="M2 22 Q5 4 12 8 Q17 12 22 4"/><path d="M5 24 Q8 12 14 18 Q18 22 22 12"/></g><g stroke="#222" stroke-width="1" fill="#fff"><path d="M3 11 L13 2"/><path d="M15 15 L22 9"/><path d="M8 14 L16 21"/><rect x="5.5" y="6" width="3" height="3"/><rect x="17" y="10" width="3" height="3"/><rect x="12.5" y="17" width="3" height="3"/><circle cx="13" cy="2.5" r="1.3" fill="#222"/><circle cx="3" cy="11" r="1.3" fill="#222"/><circle cx="22" cy="9" r="1.3" fill="#222"/><circle cx="15" cy="15" r="1.3" fill="#222"/><circle cx="8.5" cy="14" r="1.3" fill="#222"/><circle cx="16.5" cy="21.5" r="1.3" fill="#222"/></g></svg>
<svg class="abs" style="left:863px;top:60px" width="25" height="24" viewBox="0 0 25 24"><path d="M13 6 Q22 6 23 14 Q23 20 17 22 Q20 17 17 13 Q15 11 13 11Z" fill="#F4E4B0" stroke="#D8C080" stroke-width="0.8"/><path d="M11 2 L2 8.5 L11 15 V11 Q17 11 16 20 Q22 14 19 9 Q16 6 11 6Z" fill="#F0A820" stroke="#C88010" stroke-width="1"/></svg>
<div class="abs" style="left:770px;top:86px;width:208px;height:388px;background:#fff;border:1px solid #919B9C;border-top-color:#919B9C"></div>
<div class="abs" style="left:771px;top:86px;width:33px;height:1px;background:#FCFCFA"></div>
<div class="t" style="left:773.4px;top:93.7px;font-size:11px;font-weight:bold;transform:scaleX(0.9497);transform-origin:0 0">Layers</div>
<div class="abs" style="left:960px;top:94px;width:11px;height:11px;border:1px solid #7A5850;border-radius:2px;background:#fff"></div>
<svg class="abs" style="left:962px;top:96px" width="6" height="7" viewBox="0 0 6 7"><path d="M5.5 0.5 L0.5 3.5 L5.5 6.5Z" fill="#8A5A50"/></svg>
<div class="t" style="left:773.4px;top:113.5px;font-size:11px;transform:scaleX(0.8503);transform-origin:0 0">Mode:</div>
<div class="t" style="left:813.9px;top:113.5px;font-size:11px;transform:scaleX(0.8293);transform-origin:0 0">Normal</div>
<div class="abs" style="left:958px;top:111px;width:17px;height:17px;background:linear-gradient(135deg,#CFDCFD,#BCCDF9 55%,#A9BEF3);border-radius:2px"></div>
<svg class="abs" style="left:962px;top:116px" width="10" height="7" viewBox="0 0 10 7"><path d="M1 1 L5 5 L9 1" stroke="#3C5078" stroke-width="2.2" fill="none"/></svg>
<div class="t" style="left:773.4px;top:136.0px;font-size:11px;transform:scaleX(0.8969);transform-origin:0 0">Opacity:</div>
<div class="abs" style="left:814px;top:141px;width:108px;height:2px;background:#B8B8B0;border-bottom:1px solid #E8E8E0"></div>
<div class="abs" style="left:921px;top:133px;width:11px;height:17px;border:1px solid #7A8A7A;border-radius:2px;background:linear-gradient(90deg,#F8F8F6,#E0E0DC);border-top:2px solid #3CA83C;border-bottom:2px solid #3CA83C"></div>
<div class="t" style="left:938.8px;top:136.0px;font-size:11px;transform:scaleX(0.7918);transform-origin:0 0">100.0</div>
<svg class="abs" style="left:969px;top:134px" width="8" height="16" viewBox="0 0 8 16"><path d="M1 6 L4 2.5 L7 6" stroke="#C4CCD8" stroke-width="2" fill="none"/><path d="M1 10 L4 13.5 L7 10" stroke="#3C5AA0" stroke-width="2.2" fill="none"/></svg>
<div class="t" style="left:773.4px;top:157.7px;font-size:11px;transform:scaleX(0.7986);transform-origin:0 0">Lock:</div>
<div class="abs" style="left:814px;top:157px;width:13px;height:13px;border:1px solid #1C4C88;background:linear-gradient(135deg,#DCDCD4,#fff)"></div>
<div class="abs" style="left:832px;top:155px;width:16px;height:14px;background-color:#999;background-image:linear-gradient(45deg,#666 25%,transparent 25%,transparent 75%,#666 75%),linear-gradient(45deg,#666 25%,transparent 25%,transparent 75%,#666 75%);background-size:8px 8px;background-position:0 0,4px 4px"></div>
<div class="abs" style="left:774px;top:174px;width:202px;height:278px;border:1px solid #7F9DB9;background:#fff"></div>
<div class="abs" style="left:775px;top:175px;width:183px;height:259px;overflow:hidden">
<div class="abs" style="left:0;top:2px;width:183px;height:35px;background:#ECE9D8"></div>
<svg class="abs" style="left:9.5px;top:17.4px" width="15" height="9.2" viewBox="0 0 18 11"><path d="M0.8 5.5 Q5 0.8 9 0.8 Q13 0.8 17.2 5.5 Q13 10 9 10 Q5 10 0.8 5.5Z" fill="#fff" stroke="#707070" stroke-width="1.1"/><circle cx="8.5" cy="5.2" r="3.6" fill="#4A62B0"/><circle cx="8.5" cy="5.2" r="1.7" fill="#1A2040"/><circle cx="7.2" cy="3.8" r="1.2" fill="#E0E8FC"/></svg>
<div class="abs" style="left:67px;top:4px;width:31px;height:36px;border:1px solid #fff;background-color:#999;background-image:linear-gradient(45deg,#666 25%,transparent 25%,transparent 75%,#666 75%),linear-gradient(45deg,#666 25%,transparent 25%,transparent 75%,#666 75%);background-size:8px 8px;background-position:0 0,4px 4px"></div>
<div class="t" style="left:101.7px;top:16px;font-size:11px;transform:scaleX(0.8871);transform-origin:0 0">A Proven</div>
<svg class="abs" style="left:9.5px;top:57.4px" width="15" height="9.2" viewBox="0 0 18 11"><path d="M0.8 5.5 Q5 0.8 9 0.8 Q13 0.8 17.2 5.5 Q13 10 9 10 Q5 10 0.8 5.5Z" fill="#fff" stroke="#707070" stroke-width="1.1"/><circle cx="8.5" cy="5.2" r="3.6" fill="#4A62B0"/><circle cx="8.5" cy="5.2" r="1.7" fill="#1A2040"/><circle cx="7.2" cy="3.8" r="1.2" fill="#E0E8FC"/></svg>
<div class="abs" style="left:67px;top:44px;width:31px;height:36px;border:2px solid #000;background-color:#999;background-image:linear-gradient(45deg,#666 25%,transparent 25%,transparent 75%,#666 75%),linear-gradient(45deg,#666 25%,transparent 25%,transparent 75%,#666 75%);background-size:8px 8px;background-position:0 0,4px 4px"></div>
<div class="t" style="left:101.7px;top:56px;font-size:11px;transform:scaleX(0.8598);transform-origin:0 0">A Proven Road Ma</div>
<svg class="abs" style="left:9.5px;top:97.4px" width="15" height="9.2" viewBox="0 0 18 11"><path d="M0.8 5.5 Q5 0.8 9 0.8 Q13 0.8 17.2 5.5 Q13 10 9 10 Q5 10 0.8 5.5Z" fill="#fff" stroke="#707070" stroke-width="1.1"/><circle cx="8.5" cy="5.2" r="3.6" fill="#4A62B0"/><circle cx="8.5" cy="5.2" r="1.7" fill="#1A2040"/><circle cx="7.2" cy="3.8" r="1.2" fill="#E0E8FC"/></svg>
<div class="abs" style="left:67px;top:84px;width:31px;height:36px;border:2px solid #000;background-color:#999;background-image:linear-gradient(45deg,#666 25%,transparent 25%,transparent 75%,#666 75%),linear-gradient(45deg,#666 25%,transparent 25%,transparent 75%,#666 75%);background-size:8px 8px;background-position:0 0,4px 4px"></div>
<div class="t" style="left:105.3px;top:96px;font-size:11px;transform:scaleX(0.8764);transform-origin:0 0">to BANISH FEAR</div>
<svg class="abs" style="left:9.5px;top:137.4px" width="15" height="9.2" viewBox="0 0 18 11"><path d="M0.8 5.5 Q5 0.8 9 0.8 Q13 0.8 17.2 5.5 Q13 10 9 10 Q5 10 0.8 5.5Z" fill="#fff" stroke="#707070" stroke-width="1.1"/><circle cx="8.5" cy="5.2" r="3.6" fill="#4A62B0"/><circle cx="8.5" cy="5.2" r="1.7" fill="#1A2040"/><circle cx="7.2" cy="3.8" r="1.2" fill="#E0E8FC"/></svg>
<div class="abs" style="left:67px;top:124px;width:31px;height:36px;border:2px solid #000;background-color:#999;background-image:linear-gradient(45deg,#666 25%,transparent 25%,transparent 75%,#666 75%),linear-gradient(45deg,#666 25%,transparent 25%,transparent 75%,#666 75%);background-size:8px 8px;background-position:0 0,4px 4px"></div>
<div class="t" style="left:101.4px;top:136px;font-size:11px;transform:scaleX(0.8214);transform-origin:0 0">Road Map</div>
<svg class="abs" style="left:9.5px;top:177.4px" width="15" height="9.2" viewBox="0 0 18 11"><path d="M0.8 5.5 Q5 0.8 9 0.8 Q13 0.8 17.2 5.5 Q13 10 9 10 Q5 10 0.8 5.5Z" fill="#fff" stroke="#707070" stroke-width="1.1"/><circle cx="8.5" cy="5.2" r="3.6" fill="#4A62B0"/><circle cx="8.5" cy="5.2" r="1.7" fill="#1A2040"/><circle cx="7.2" cy="3.8" r="1.2" fill="#E0E8FC"/></svg>
<div class="abs" style="left:67px;top:164px;width:31px;height:36px;border:2px solid #000;background-color:#999;background-image:linear-gradient(45deg,#666 25%,transparent 25%,transparent 75%,#666 75%),linear-gradient(45deg,#666 25%,transparent 25%,transparent 75%,#666 75%);background-size:8px 8px;background-position:0 0,4px 4px"></div>
<div class="t" style="left:101.4px;top:176px;font-size:11px;transform:scaleX(0.8827);transform-origin:0 0">Move Upward</div>
<svg class="abs" style="left:9.5px;top:217.4px" width="15" height="9.2" viewBox="0 0 18 11"><path d="M0.8 5.5 Q5 0.8 9 0.8 Q13 0.8 17.2 5.5 Q13 10 9 10 Q5 10 0.8 5.5Z" fill="#fff" stroke="#707070" stroke-width="1.1"/><circle cx="8.5" cy="5.2" r="3.6" fill="#4A62B0"/><circle cx="8.5" cy="5.2" r="1.7" fill="#1A2040"/><circle cx="7.2" cy="3.8" r="1.2" fill="#E0E8FC"/></svg>
<div class="abs" style="left:67px;top:204px;width:31px;height:36px;border:2px solid #000;background-color:#999;background-image:linear-gradient(45deg,#666 25%,transparent 25%,transparent 75%,#666 75%),linear-gradient(45deg,#666 25%,transparent 25%,transparent 75%,#666 75%);background-size:8px 8px;background-position:0 0,4px 4px"></div>
<div class="t" style="left:101.4px;top:216px;font-size:11px;transform:scaleX(0.8613);transform-origin:0 0">Navigation Tools T</div>
<div class="abs" style="left:67px;top:244px;width:31px;height:36px;border:2px solid #000;background-color:#999;background-image:linear-gradient(45deg,#666 25%,transparent 25%,transparent 75%,#666 75%),linear-gradient(45deg,#666 25%,transparent 25%,transparent 75%,#666 75%);background-size:8px 8px;background-position:0 0,4px 4px"></div>
</div>
<div class="abs" style="left:863px;top:183px;width:2px;height:2px;background:#fff"></div>
<div class="abs" style="left:854px;top:310px;width:14px;height:1px;background:#ddd;opacity:.8"></div>
<div class="abs" style="left:853px;top:367px;width:15px;height:1px;background:#ddd;opacity:.8"></div>
<div class="abs" style="left:958px;top:175px;width:17px;height:259px;background:#F8F7F2"></div>
<div class="abs" style="left:959px;top:176px;width:15px;height:17px;background:#F0EEE6;border:1px solid #E0DED2;border-radius:3px"></div>
<svg class="abs" style="left:962px;top:181px" width="9" height="6" viewBox="0 0 9 6"><path d="M1 5 L4.5 1.5 L8 5" stroke="#C8C6BA" stroke-width="2" fill="none"/></svg>
<div class="abs sthumb" style="left:959px;top:194px;width:15px;height:94px;background:linear-gradient(90deg,#C9D7FC,#BBCDF9 50%,#B4C7F6)"></div>
<svg class="abs" style="left:963px;top:237px" width="8" height="9" viewBox="0 0 8 9"><path d="M0 0.5H8M0 2.5H8M0 4.5H8M0 6.5H8" stroke="#EEF4FE" stroke-width="1"/><path d="M0 1.5H8M0 3.5H8M0 5.5H8M0 7.5H8" stroke="#8CB0F8" stroke-width="1"/></svg>
<div class="abs sbtn" style="left:959px;top:417px;width:15px;height:16px"></div>
<svg class="abs" style="left:962px;top:422px" width="9" height="6" viewBox="0 0 9 6"><path d="M1 1 L4.5 4.5 L8 1" stroke="#4D6185" stroke-width="2" fill="none"/></svg>
<div class="abs" style="left:775px;top:434px;width:200px;height:17px;background:#F8F7F2"></div>
<div class="abs" style="left:777px;top:435px;width:15px;height:15px;background:#F0EEE6;border:1px solid #E0DED2;border-radius:3px"></div>
<svg class="abs" style="left:781px;top:438px" width="6" height="9" viewBox="0 0 6 9"><path d="M5 1 L1.5 4.5 L5 8" stroke="#C8C6BA" stroke-width="2" fill="none"/></svg>
<div class="abs sthumb" style="left:793px;top:435px;width:61px;height:15px;background:linear-gradient(#C9D7FC,#BBCDF9 50%,#B4C7F6)"></div>
<svg class="abs" style="left:819px;top:439px" width="9" height="8" viewBox="0 0 9 8"><path d="M0.5 0V8M2.5 0V8M4.5 0V8M6.5 0V8" stroke="#EEF4FE" stroke-width="1"/><path d="M1.5 0V8M3.5 0V8M5.5 0V8M7.5 0V8" stroke="#8CB0F8" stroke-width="1"/></svg>
<div class="abs sbtn" style="left:940px;top:435px;width:15px;height:15px"></div>
<svg class="abs" style="left:945px;top:438px" width="6" height="9" viewBox="0 0 6 9"><path d="M1 1 L4.5 4.5 L1 8" stroke="#4D6185" stroke-width="2" fill="none"/></svg>
<div class="abs" style="left:771px;top:453px;width:206px;height:20px;background:#F7F6F1"></div>
<svg class="abs" style="left:783px;top:456px" width="12" height="15" viewBox="0 0 12 15"><path d="M1 1 H7.5 L11 4.5 V14 H1Z" fill="#fff" stroke="#888" stroke-width="1"/><path d="M7.5 1 V4.5 H11" fill="#E8E8E8" stroke="#888" stroke-width="0.8"/></svg>
<svg class="abs" style="left:817px;top:457px;opacity:.6" width="12" height="13" viewBox="0 0 12 13"><path d="M6 0.8 L11 6 H8.5 V12 H3.5 V6 H1Z" fill="#7CC07C" stroke="#3E8040" stroke-width="1"/></svg>
<svg class="abs" style="left:851px;top:457px;opacity:.6" width="12" height="13" viewBox="0 0 12 13"><path d="M6 12.2 L11 7 H8.5 V1 H3.5 V7 H1Z" fill="#E89048" stroke="#8A7A30" stroke-width="1"/></svg>
<svg class="abs" style="left:884px;top:457px" width="14" height="13" viewBox="0 0 14 13"><rect x="1" y="1" width="9" height="8" fill="#C8D4E8" stroke="#4A5E90" stroke-width="1"/><rect x="4" y="4" width="9" height="8" fill="#6A88C8" stroke="#2A3E78" stroke-width="1"/><rect x="5.5" y="5.5" width="6" height="3" fill="#A8C0E8"/></svg>
<svg class="abs" style="left:918px;top:456px;opacity:.65" width="14" height="15" viewBox="0 0 14 15"><g fill="none" stroke="#667066" stroke-width="1.4"><circle cx="7" cy="2.6" r="1.6"/><path d="M7 4 V13"/><path d="M4 6 H10"/><path d="M1.5 8 Q2 13 7 13.5 Q12 13 12.5 8"/><path d="M0.8 10 L1.6 7.5 L3.6 9.5 M13.2 10 L12.4 7.5 L10.4 9.5"/></g></svg>
<svg class="abs" style="left:953px;top:456px" width="13" height="15" viewBox="0 0 13 15"><ellipse cx="6.5" cy="3.2" rx="5.3" ry="2.4" fill="#9A9A9A" stroke="#444" stroke-width="1"/><path d="M1.8 4.5 L2.8 13 Q6.5 15 10.2 13 L11.2 4.5" fill="#6A6A6A" stroke="#333" stroke-width="1"/><ellipse cx="6.5" cy="3.2" rx="3.3" ry="1.2" fill="#333"/></svg>
<div class="abs" style="left:771px;top:483px;width:29px;height:28px;background:#FCFCFA;border:1px solid #919B9C;border-bottom:none;border-radius:3px 3px 0 0"></div>
<div class="abs" style="left:771px;top:483px;width:29px;height:3px;background:linear-gradient(#E68B2C,#FFC73C);border-radius:3px 3px 0 0"></div>
<div class="abs" style="left:801px;top:485px;width:24px;height:23px;background:linear-gradient(#FFFFFF,#F4F3EE 60%,#E6E4DA);border:1px solid #91A7B4;border-bottom:none;border-radius:3px 3px 0 0"></div>
<div class="abs" style="left:828px;top:485px;width:25px;height:23px;background:linear-gradient(#FFFFFF,#F4F3EE 60%,#E6E4DA);border:1px solid #91A7B4;border-bottom:none;border-radius:3px 3px 0 0"></div>
<div class="abs" style="left:774px;top:488px;width:23px;height:19px;background:#fff;border:1px solid #000"></div>
<div class="abs" style="left:779px;top:491px;width:12px;height:12px;border-radius:6px;background:#000"></div>
<svg class="abs" style="left:791px;top:501px" width="5" height="5" viewBox="0 0 5 5"><path d="M5 0 V5 H0Z" fill="#7088D0"/></svg>
<div class="abs" style="left:803px;top:489px;width:20px;height:18px;border:1px solid #000;background:linear-gradient(90deg,#F0A030,#FFD080 20%,#F0A030 35%,#FFC868 50%,#E89828 65%,#FFD080 80%,#F0A030)"></div>
<div class="abs" style="left:830px;top:489px;width:21px;height:18px;border:1px solid #000;background:linear-gradient(90deg,#000,#888 50%,#fff)"></div>
<div class="abs" style="left:770px;top:510px;width:208px;height:228px;background:#fff;border:1px solid #919B9C;border-bottom:none"></div>
<div class="abs" style="left:772px;top:510px;width:27px;height:1px;background:#FCFCFA"></div>
<div class="t" style="left:773.9px;top:517.5px;font-size:11px;font-weight:bold;transform:scaleX(0.8948);transform-origin:0 0">Brushes</div>
<div class="abs" style="left:960px;top:518px;width:11px;height:11px;border:1px solid #7A5850;border-radius:2px;background:#fff"></div>
<svg class="abs" style="left:962px;top:520px" width="6" height="7" viewBox="0 0 6 7"><path d="M5.5 0.5 L0.5 3.5 L5.5 6.5Z" fill="#8A5A50"/></svg>
<div class="t" style="left:774.2px;top:533.5px;font-size:11px;font-style:italic;transform:scaleX(0.8632);transform-origin:0 0">Circle (11) (13 × 13)</div>
<div class="abs" style="left:774px;top:547px;width:202px;height:170px;border:1px solid #7F9DB9;background:#fff"></div>
<svg class="abs" style="left:775px;top:548px" width="183" height="168" viewBox="775 548 183 168">
<defs><radialGradient id="fz"><stop offset="0" stop-color="#000"/><stop offset="0.35" stop-color="#000" stop-opacity="0.75"/><stop offset="1" stop-color="#000" stop-opacity="0"/></radialGradient></defs>
<path d="M843.1 575.9 V580.9 H838.1Z" fill="#F0C070"/>
<path d="M816.1 552.4 L819.1 559.4" stroke="#999" stroke-width="1.3"/>
<path d="M877.1 575.9 V580.9 H872.1Z" fill="#6C8CD8"/>
<ellipse cx="860.6" cy="564.4" rx="5.5" ry="1.5" transform="rotate(-50 860.6 564.4)" fill="#000"/>
<path d="M911.1 575.9 V580.9 H906.1Z" fill="#6C8CD8"/>
<ellipse cx="894.6" cy="564.4" rx="12.5" ry="1.8" transform="rotate(-45 894.6 564.4)" fill="#000"/>
<path d="M945.1 575.9 V580.9 H940.1Z" fill="#6C8CD8"/>
<ellipse cx="928.6" cy="564.4" rx="9" ry="1.7" transform="rotate(-45 928.6 564.4)" fill="#000"/>
<path d="M809.1 609.9 V614.9 H804.1Z" fill="#6C8CD8"/>
<ellipse cx="792.6" cy="598.4" rx="3.2" ry="1.1" transform="rotate(-45 792.6 598.4)" fill="#000"/>
<path d="M843.1 609.9 V614.9 H838.1Z" fill="#6C8CD8"/>
<circle cx="826.6" cy="598.4" r="0.6" fill="#000"/>
<path d="M877.1 609.9 V614.9 H872.1Z" fill="#6C8CD8"/>
<circle cx="860.6" cy="598.4" r="1.5" fill="#000"/>
<path d="M911.1 609.9 V614.9 H906.1Z" fill="#6C8CD8"/>
<circle cx="894.6" cy="598.4" r="2.5" fill="#000"/>
<path d="M945.1 609.9 V614.9 H940.1Z" fill="#6C8CD8"/>
<circle cx="928.6" cy="598.4" r="3.5" fill="#000"/>
<path d="M809.1 643.9 V648.9 H804.1Z" fill="#6C8CD8"/>
<circle cx="792.6" cy="632.4" r="4.5" fill="#000"/>
<path d="M843.1 643.9 V648.9 H838.1Z" fill="#6C8CD8"/>
<circle cx="826.6" cy="632.4" r="5.5" fill="#000"/>
<path d="M877.1 643.9 V648.9 H872.1Z" fill="#6C8CD8"/>
<circle cx="860.6" cy="632.4" r="6.5" fill="#000"/>
<path d="M911.1 643.9 V648.9 H906.1Z" fill="#6C8CD8"/>
<circle cx="894.6" cy="632.4" r="7.5" fill="#000"/>
<path d="M945.1 643.9 V648.9 H940.1Z" fill="#6C8CD8"/>
<circle cx="928.6" cy="632.4" r="8.5" fill="#000"/>
<path d="M809.1 677.9 V682.9 H804.1Z" fill="#6C8CD8"/>
<circle cx="792.6" cy="666.4" r="9.5" fill="#000"/>
<path d="M843.1 677.9 V682.9 H838.1Z" fill="#6C8CD8"/>
<circle cx="826.6" cy="666.4" r="2.3" fill="url(#fz)"/>
<path d="M877.1 677.9 V682.9 H872.1Z" fill="#6C8CD8"/>
<circle cx="860.6" cy="666.4" r="3.3" fill="url(#fz)"/>
<path d="M911.1 677.9 V682.9 H906.1Z" fill="#6C8CD8"/>
<circle cx="894.6" cy="666.4" r="4.3" fill="url(#fz)"/>
<path d="M945.1 677.9 V682.9 H940.1Z" fill="#6C8CD8"/>
<circle cx="928.6" cy="666.4" r="5.3" fill="url(#fz)"/>
<path d="M809.1 711.9 V716.9 H804.1Z" fill="#6C8CD8"/>
<circle cx="792.6" cy="700.4" r="6.0" fill="url(#fz)"/>
<path d="M843.1 711.9 V716.9 H838.1Z" fill="#6C8CD8"/>
<circle cx="826.6" cy="700.4" r="7.0" fill="url(#fz)"/>
<path d="M877.1 711.9 V716.9 H872.1Z" fill="#6C8CD8"/>
<circle cx="860.6" cy="700.4" r="8.0" fill="url(#fz)"/>
<path d="M911.1 711.9 V716.9 H906.1Z" fill="#6C8CD8"/>
<circle cx="894.6" cy="700.4" r="9.0" fill="url(#fz)"/>
<path d="M945.1 711.9 V716.9 H940.1Z" fill="#6C8CD8"/>
<circle cx="928.6" cy="700.4" r="10.0" fill="url(#fz)"/>
<rect x="810.5" y="616.5" width="33" height="33" fill="none" stroke="#000" stroke-width="1"/>
</svg>
<div class="abs" style="left:958px;top:548px;width:17px;height:168px;background:#F8F7F2"></div>
<div class="abs sbtn" style="left:959px;top:549px;width:15px;height:16px"></div>
<svg class="abs" style="left:962px;top:554px" width="9" height="6" viewBox="0 0 9 6"><path d="M1 5 L4.5 1.5 L8 5" stroke="#4D6185" stroke-width="2" fill="none"/></svg>
<div class="abs sthumb" style="left:959px;top:566px;width:15px;height:65px;background:linear-gradient(90deg,#C9D7FC,#BBCDF9 50%,#B4C7F6)"></div>
<svg class="abs" style="left:963px;top:594px" width="8" height="9" viewBox="0 0 8 9"><path d="M0 0.5H8M0 2.5H8M0 4.5H8M0 6.5H8" stroke="#EEF4FE" stroke-width="1"/><path d="M0 1.5H8M0 3.5H8M0 5.5H8M0 7.5H8" stroke="#8CB0F8" stroke-width="1"/></svg>
<div class="abs sbtn" style="left:959px;top:699px;width:15px;height:16px"></div>
<svg class="abs" style="left:962px;top:704px" width="9" height="6" viewBox="0 0 9 6"><path d="M1 1 L4.5 4.5 L8 1" stroke="#4D6185" stroke-width="2" fill="none"/></svg>
<div class="t" style="left:773.9px;top:724.5px;font-size:11px;transform:scaleX(0.8152);transform-origin:0 0">Spacing:</div>
<div class="abs" style="left:812px;top:730px;width:110px;height:2px;background:#B8B8B0;border-bottom:1px solid #E8E8E0"></div>
<div class="abs" style="left:822px;top:723px;width:11px;height:16px;border:1px solid #7A8A7A;border-radius:2px;background:linear-gradient(90deg,#F8F8F6,#E0E0DC);border-top:2px solid #3CA83C"></div>
<div class="abs" style="left:928px;top:721px;width:38px;height:18px;border:1px solid #7F9DB9;background:#fff"></div>
<div class="t" style="left:931.7px;top:724.5px;font-size:11px;transform:scaleX(0.8216);transform-origin:0 0">20.0</div>
<div class="abs" style="left:966px;top:722px;width:10px;height:16px;border-radius:2px;background:linear-gradient(#DCE6FC,#C4D2F4)"></div>
<svg class="abs" style="left:967px;top:722px" width="8" height="16" viewBox="0 0 8 16"><path d="M1 6 L4 2.5 L7 6" stroke="#3C5AA0" stroke-width="2.2" fill="none"/><path d="M1 10 L4 13.5 L7 10" stroke="#3C5AA0" stroke-width="2.2" fill="none"/></svg>

<!-- red hand-drawn annotations -->
<svg class="abs" style="left:0;top:0;pointer-events:none" width="1024" height="768" viewBox="0 0 1024 768">
  <path fill="#FE0000" fill-rule="evenodd" d="M535 190.5 L600 190 L680 191 L760.5 190 L761 215 L759 249 L700 247.5 L640 246 L580 245.5 L527 244 L530 220 Z  M544 199 L748.6 198.6 L750 220 L751 240.5 L700 239.5 L620 237.5 L538.5 236 L541 215 Z"/>
  <path fill="#FE0000" fill-rule="evenodd" d="M769 169.5 L850 169.2 L900 168.5 L960 167.6 L1000.7 167.2 L1001 190 L1000.7 212.4 L993 216 L984 220 L900 220.2 L840 220 L769 220 Z  M777.4 177.2 L991 177.2 L991.3 195 L991 212 L940 212 L880 212 L777.4 212 Z"/>
</svg>

<!-- TOOLBOX -->
<div class="abs" style="left:0;top:384px;width:168px;height:354px;background:#7A96E0;border-radius:4px 3px 0 0"></div>
<div class="abs" style="left:0;top:384px;width:168px;height:21px;border-radius:4px 3px 0 0;background:linear-gradient(#7B96E2 0%,#8CA6EC 14%,#7F9AE4 32%,#7A96E0 70%,#728DDC 100%)"></div>
<div class="abs" style="left:0;top:390px;width:4px;height:348px;background:linear-gradient(90deg,#5C74D4,#6C86E0 40%,#748EE2)"></div>
<div class="abs" style="left:164px;top:390px;width:4px;height:348px;background:linear-gradient(90deg,#7C93E2,#6578D8 50%,#5A6CD0)"></div>
<div class="abs" style="left:4px;top:405px;width:160px;height:333px;background:#ECE9D8"></div>
<div class="t" style="left:4.5px;top:389.5px;font-size:13px;font-weight:bold;color:#D6E2F8;transform:scaleX(0.8812);transform-origin:0 0">Toolbox</div>
<div class="abs" style="left:149px;top:390px;width:13px;height:13px;border-radius:2px;border:1px solid #E8EEF8;background:linear-gradient(135deg,#D08878,#B85A48 60%,#A84838)"></div>
<svg class="abs" style="left:151px;top:392px" width="9" height="9" viewBox="0 0 9 9"><path d="M1.2 1.2 L7.8 7.8 M7.8 1.2 L1.2 7.8" stroke="#fff" stroke-width="1.8"/></svg>
<svg class="abs" style="left:11px;top:406px" width="148" height="26" viewBox="0 0 148 26"><path d="M1 26 Q1 12 14 9 Q28 7 35 17 Q40 3 54 0 H145 L138 26Z" fill="#D6D2C0"/><g fill="#ECE9D8"><circle cx="53" cy="13" r="13"/><circle cx="86.5" cy="14" r="14.5"/><circle cx="13" cy="21" r="9"/></g><g fill="#D6D2C0"><circle cx="53" cy="13" r="6"/><circle cx="86.5" cy="14" r="8.5"/><circle cx="13" cy="23" r="4.5"/></g></svg>
<div class="abs" style="left:100px;top:562px;width:32px;height:31px;border:1px solid #B4B0A4;border-radius:4px;background:linear-gradient(#E8E6DE,#DEDCD2)"></div>
<svg class="abs" style="left:9.5px;top:438.2px" width="22" height="22" viewBox="0 0 22 22"><rect x="2.5" y="5.5" width="17" height="12" fill="#D8D8D8" stroke="#111" stroke-width="1.4" stroke-dasharray="1.4 1.2"/></svg>
<svg class="abs" style="left:40.4px;top:438.2px" width="22" height="22" viewBox="0 0 22 22"><ellipse cx="11" cy="11" rx="9" ry="6.8" fill="#D8D8D8" stroke="#111" stroke-width="1.4" stroke-dasharray="1.4 1.2"/></svg>
<svg class="abs" style="left:72.7px;top:438.2px" width="22" height="22" viewBox="0 0 22 22"><path d="M4 14 Q1 8 8 5 Q17 2 19 7 Q20 12 12 15 Q7 17 5 15 M5 15 L4 19 M6 15 L7 18" fill="none" stroke="#9A9A96" stroke-width="2"/><path d="M4 14 Q1 8 8 5 Q17 2 19 7 Q20 12 12 15" fill="none" stroke="#E4E4E0" stroke-width="0.7"/></svg>
<svg class="abs" style="left:105.5px;top:438.2px" width="22" height="22" viewBox="0 0 22 22"><path d="M8 8 L17 18" stroke="#5A7A5A" stroke-width="2.4"/><path d="M8 8 L17 18" stroke="#888" stroke-width="0.8"/><circle cx="6.5" cy="6.5" r="5" fill="#FFF0A0" opacity="0.7"/><circle cx="6.5" cy="6.5" r="2.5" fill="#FFFFF0"/></svg>
<svg class="abs" style="left:137.5px;top:438.2px" width="22" height="22" viewBox="0 0 22 22"><rect x="13" y="1" width="7" height="6.5" fill="#4A70C0" stroke="#2A3E78"/><rect x="13" y="7.8" width="7" height="6.5" fill="#B83018" stroke="#601808"/><rect x="13" y="14.6" width="7" height="6.5" fill="#8A6A10" stroke="#4A3808"/><rect x="15" y="16.6" width="3" height="2.5" fill="#E8E0C0"/><path d="M4 5 H10 L15 10.5 L10 16 L6 12 Z" fill="#F09020"/><rect x="1" y="5" width="4" height="6" fill="#fff" stroke="#888" stroke-width="0.8"/></svg>
<svg class="abs" style="left:9.5px;top:470.2px" width="22" height="22" viewBox="0 0 22 22"><path d="M7 2 L10 12 M15 2 L12 12" stroke="#B8B8B8" stroke-width="2.6"/><path d="M7 2 L10 12 M15 2 L12 12" stroke="#777" stroke-width="0.6"/><circle cx="6.5" cy="16.5" r="3" fill="none" stroke="#3A5A98" stroke-width="2.2"/><circle cx="15.5" cy="16.5" r="3" fill="none" stroke="#3A5A98" stroke-width="2.2"/><path d="M10 13 H12" stroke="#3A5A98" stroke-width="2"/><path d="M12 8 Q12 1 16 1.5 H21" fill="none" stroke="#F0A020" stroke-width="1.2"/></svg>
<svg class="abs" style="left:40.4px;top:470.2px" width="22" height="22" viewBox="0 0 22 22"><rect x="2" y="8" width="12" height="9" fill="#3A64B8" stroke="#B04020" stroke-width="0.8" stroke-dasharray="1 1"/><circle cx="8" cy="5.5" r="4.2" fill="#F09020" stroke="#B86010" stroke-width="1" stroke-dasharray="1.5 1"/><path d="M5 9 L8 14 L11 9" fill="#E8ECF8"/><path d="M11 13 H16 Q20 13 20 17 V20 H11Z" fill="#F4F4F4" stroke="#C8C8C8"/></svg>
<svg class="abs" style="left:72.7px;top:470.2px" width="22" height="22" viewBox="0 0 22 22"><rect x="1.5" y="1" width="3.6" height="20" fill="#fff" stroke="#555" stroke-width="0.9"/><circle cx="3.3" cy="6" r="0.9" fill="#555"/><circle cx="3.3" cy="11" r="0.9" fill="#555"/><circle cx="3.3" cy="16" r="0.9" fill="#555"/><path d="M5 5 Q12 1 15 6" fill="none" stroke="#B8B8B8" stroke-width="1.6"/><path d="M15 4.5 Q10.5 10 12.5 14 H17.5 Q19.5 10 15 4.5Z" fill="#F8E8B0" stroke="#D89010" stroke-width="1.3"/><path d="M15 6 V11" stroke="#8A5A10" stroke-width="0.9"/><rect x="12.5" y="14.5" width="5" height="6.5" fill="#3A5AA8" stroke="#1E3470" stroke-width="0.8"/></svg>
<svg class="abs" style="left:105.5px;top:470.2px" width="22" height="22" viewBox="0 0 22 22"><path d="M4 17 L14 6" stroke="#3A5AA8" stroke-width="3.2"/><path d="M5 16 L13 7" stroke="#C8D8F0" stroke-width="1.2"/><path d="M13 7 L16 3.5" stroke="#222" stroke-width="3.6"/><circle cx="17" cy="3" r="2.4" fill="#222"/><path d="M2 19 Q2 16 4 15.5 Q5.5 17 5 19.5 Q3.5 21 2 19Z" fill="#3A5AA8"/></svg>
<svg class="abs" style="left:137.5px;top:470.2px" width="22" height="22" viewBox="0 0 22 22"><path d="M14 14 L20 20" stroke="#6A7A6A" stroke-width="3"/><path d="M14 14 L20 20" stroke="#A8B0A0" stroke-width="1"/><circle cx="8.5" cy="8.5" r="7" fill="#8CB0E8" stroke="#9AA0A8" stroke-width="1.6"/><path d="M2.5 8 Q8.5 5.5 14.5 8 A6 6 0 0 0 2.5 8Z" fill="#C0D8F8"/></svg>
<svg class="abs" style="left:9.5px;top:502.2px" width="22" height="22" viewBox="0 0 22 22"><rect x="9" y="0.5" width="4" height="4" fill="#3A5AA8" stroke="#1E3470" stroke-width="0.7"/><path d="M9.5 5 L4 20 L6 17 L10 9 M12.5 5 L18 20 L16 17 L12 9" fill="#88A8E0" stroke="#2A427E" stroke-width="1"/><circle cx="11" cy="7" r="2.3" fill="#C8C8C8" stroke="#444" stroke-width="0.8"/><circle cx="11" cy="7" r="0.8" fill="#A03020"/><rect x="9.3" y="11" width="3.4" height="5" rx="1.5" fill="#E0E0E0" stroke="#555" stroke-width="0.7"/><path d="M2 13.5 H20" stroke="#555" stroke-width="0.7"/><circle cx="17.5" cy="19.5" r="1.3" fill="#C8C8C8" stroke="#555" stroke-width="0.6"/></svg>
<svg class="abs" style="left:40.4px;top:502.2px" width="22" height="22" viewBox="0 0 22 22"><path d="M11 0.8 L15 5.5 H12.8 V9.2 H16.5 V7 L21.2 11 L16.5 15 V12.8 H12.8 V16.5 H15 L11 21.2 L7 16.5 H9.2 V12.8 H5.5 V15 L0.8 11 L5.5 7 V9.2 H9.2 V5.5 H7Z" fill="#4A6CC0" stroke="#2A4288" stroke-width="0.8"/></svg>
<svg class="abs" style="left:72.7px;top:502.2px" width="22" height="22" viewBox="0 0 22 22"><rect x="6" y="6.5" width="10" height="9" fill="#E4E4E8" stroke="#B0B0B8" stroke-width="0.8"/><path d="M11 1 V5 M11 17 V21 M1 11 H5 M17 11 H21" stroke="#111" stroke-width="1"/><path d="M11 0 L9 3 H13Z M11 22 L9 19 H13Z M0 11 L3 9 V13Z M22 11 L19 9 V13Z" fill="#111"/></svg>
<svg class="abs" style="left:105.5px;top:502.2px" width="22" height="22" viewBox="0 0 22 22"><path d="M2 20 L5 13 L15 3 L13 9 L18 5 L11 14 L2 20Z" fill="#D8D8D4" stroke="#888" stroke-width="0.9"/><path d="M5 13 L11 14" stroke="#888" stroke-width="0.7"/><path d="M12 7 L12 11 M15 3 L13 9" stroke="#888" stroke-width="0.7"/></svg>
<svg class="abs" style="left:137.5px;top:502.2px" width="22" height="22" viewBox="0 0 22 22"><rect x="4" y="2" width="10" height="9" fill="#4A6CC0" stroke="#2A4288" stroke-width="0.8"/><path d="M10 7 L19 12 L14 20 L5 15Z" fill="#4A6CC0" stroke="#2A4288" stroke-width="0.8"/><path d="M16 2 L20 2 L20 6 M20 2 Q18 3 17.5 6" fill="none" stroke="#2A4288" stroke-width="1.2"/><path d="M15.5 1.5 H20.5 V6.5" fill="none" stroke="#fff" stroke-width="2.6"/><path d="M15.5 1.5 H20.5 V6.5" fill="none" stroke="#3A58A8" stroke-width="1"/><path d="M1.5 15 V20.5 H6.5" fill="none" stroke="#fff" stroke-width="2.6"/><path d="M1.5 15 V20.5 H6.5" fill="none" stroke="#3A58A8" stroke-width="1"/></svg>
<svg class="abs" style="left:9.5px;top:535.0px" width="22" height="22" viewBox="0 0 22 22"><rect x="5.5" y="5.5" width="15" height="14" fill="#4A6CC0" stroke="#2A4288" stroke-width="1"/><rect x="1" y="1" width="6" height="6" fill="#6A8CD8" stroke="#2A4288" stroke-width="1"/><path d="M7 1.5 H14 M1.5 7 V13" stroke="#444" stroke-width="0.8" stroke-dasharray="1 1"/><path d="M5 5 L15 15" stroke="#fff" stroke-width="1.6"/><path d="M16.5 16.5 L11.5 15 L15 11.5Z" fill="#fff"/></svg>
<svg class="abs" style="left:40.4px;top:535.0px" width="22" height="22" viewBox="0 0 22 22"><path d="M5 3 H16 L20 17 H7 L5 3Z" fill="#6A8CD8" stroke="#2A4288" stroke-width="0.9"/><path d="M5 3 L3 17 H7" fill="#4A6CC0" stroke="#2A4288" stroke-width="0.9"/><path d="M1 18 H6 V16 L9.5 19 L6 22 V20 H1Z" fill="#fff" stroke="#2A4288" stroke-width="0.8"/></svg>
<svg class="abs" style="left:72.7px;top:535.0px" width="22" height="22" viewBox="0 0 22 22"><path d="M7 2 H15 L20 17 H2Z" fill="#6A8CD8" stroke="#2A4288" stroke-width="0.9"/><rect x="2.5" y="16" width="5" height="5" fill="#3A5AA8"/><rect x="14.5" y="16" width="5" height="5" fill="#3A5AA8"/><path d="M6.5 17 L3.5 20 M3.5 18 V20 H5.5 M15.5 17 L18.5 20 M18.5 18 V20 H16.5" stroke="#fff" stroke-width="0.9" fill="none"/></svg>
<svg class="abs" style="left:105.5px;top:535.0px" width="22" height="22" viewBox="0 0 22 22"><path d="M1 3 H12 V19 H1Z" fill="#3A5CB0" stroke="#2A4288" stroke-width="0.9"/><path d="M12 3 Q16 1.5 21 1 V21 Q16 20.5 12 19Z" fill="#6A8CD8" stroke="#2A4288" stroke-width="0.9"/><path d="M4 11 L8 8 V10 H14 V8 L18 11 L14 14 V12 H8 V14Z" fill="#E8EEF8"/></svg>
<svg class="abs" style="left:137.5px;top:535.0px" width="22" height="22" viewBox="0 0 22 22"><path d="M7.5 1 H14.5 L21.5 20 H15.5 L14.3 16 H7.7 L6.5 20 H0.5Z M9 12 H13 L11 5.5Z" fill="#141010" fill-rule="evenodd"/><path d="M8.5 2 H10 L4 19 H2Z" fill="#6A6058" opacity="0.7"/></svg>
<svg class="abs" style="left:9.5px;top:566.9px" width="22" height="22" viewBox="0 0 22 22"><path d="M6 6 L14 3 L20 14 L10 20 L4 10Z" fill="#E8E8E8" stroke="#888" stroke-width="1"/><path d="M6 6 Q10 -2 14 3" fill="none" stroke="#A0A0A0" stroke-width="1.4"/><circle cx="11" cy="9.5" r="1.8" fill="#888"/><path d="M11 9 V3" stroke="#777" stroke-width="0.9"/><path d="M5 8 Q0 7 1.5 11 L2 17 L3.5 16 L3.5 11 Q4 10 5 10Z" fill="#88A8E0" stroke="#3A5AA8" stroke-width="0.7"/></svg>
<svg class="abs" style="left:40.4px;top:566.9px" width="22" height="22" viewBox="0 0 22 22"><defs><linearGradient id="gr1"><stop offset="0" stop-color="#555"/><stop offset="1" stop-color="#F4F4F4"/></linearGradient></defs><rect x="2" y="2.5" width="18" height="17" fill="url(#gr1)" stroke="#666" stroke-width="1.2"/></svg>
<svg class="abs" style="left:72.7px;top:566.9px" width="22" height="22" viewBox="0 0 22 22"><path d="M3 19 L4.5 14 L16 2.5 Q18.5 2 19.5 5 L8 16.5Z" fill="#F09030" stroke="#B86010" stroke-width="0.8"/><path d="M3 19 L4.5 14 L8 16.5Z" fill="#E8D0A8" stroke="#8A6A40" stroke-width="0.6"/><path d="M3 19 L3.8 16.8 L5 17.8Z" fill="#333"/><path d="M6 14 L16.5 3.5" stroke="#F8C080" stroke-width="1.2"/></svg>
<svg class="abs" style="left:105.5px;top:566.9px" width="22" height="22" viewBox="0 0 22 22"><path d="M9 12 L18 1.5 Q20 1 20.5 3 L12 14Z" fill="#C87838" stroke="#8A4818" stroke-width="0.7"/><path d="M7.5 12.5 L9.5 11 L12.5 13.5 L11 15.5Z" fill="#D8D8D8" stroke="#666" stroke-width="0.7"/><path d="M7.5 12.8 L11 15.5 Q7 19.5 2 19.5 Q5.5 17 7.5 12.8Z" fill="#111"/></svg>
<svg class="abs" style="left:137.5px;top:566.9px" width="22" height="22" viewBox="0 0 22 22"><path d="M2 13 L8 4 H20 L14 13Z" fill="#D8D4CC" stroke="#E06020" stroke-width="1.2"/><path d="M2 13 V16.5 H14 V13 M14 16.5 L20 7.5 V4" fill="#F8F0E8" stroke="#E06020" stroke-width="1.2"/></svg>
<svg class="abs" style="left:9.5px;top:599.5px" width="22" height="22" viewBox="0 0 22 22"><path d="M10 11 L18 2" stroke="#222" stroke-width="3.6"/><path d="M5 17 L11 10" stroke="#888" stroke-width="2.2"/><path d="M6 16 L11 10.5" stroke="#E8E8E8" stroke-width="0.8"/><path d="M9 13 Q14 12 13 16 Q15 17 18 15" fill="none" stroke="#999" stroke-width="1.3"/><circle cx="3" cy="19.5" r="1.6" fill="#6A9AE8"/><path d="M4 18 L5.5 16.5" stroke="#6A9AE8" stroke-width="1"/></svg>
<svg class="abs" style="left:40.4px;top:599.5px" width="22" height="22" viewBox="0 0 22 22"><path d="M3 8 Q3 6 6 6 H12 Q15 6 15 8 V16 Q15 18 12 18 H6 Q3 18 3 16Z" fill="#3A5AA8" stroke="#1E3470" stroke-width="0.9"/><rect x="5.5" y="2" width="7" height="4.5" rx="1.5" fill="#6A5848" stroke="#333" stroke-width="0.8"/><path d="M4 9.5 H14" stroke="#9AB8F0" stroke-width="1.4"/><path d="M14 17 L20 15 M15 19 L19 20.5 M16 16 L18 19 M13.5 20 L15 17.5" stroke="#3A64B8" stroke-width="1.1"/></svg>
<svg class="abs" style="left:72.7px;top:599.5px" width="22" height="22" viewBox="0 0 22 22"><circle cx="11" cy="4" r="2.6" fill="#fff" stroke="#D85828" stroke-width="1.1"/><path d="M9.8 6.5 H12.2 V11 H9.8Z" fill="#fff" stroke="#D85828" stroke-width="0.9"/><rect x="4" y="11" width="14" height="7.5" rx="1.2" fill="#F8ECE0" stroke="#D85828" stroke-width="1.2"/><path d="M4.5 14.5 H17.5" stroke="#D85828" stroke-width="0.9"/><path d="M6 16.5 H16" stroke="#333" stroke-width="1"/></svg>
<svg class="abs" style="left:105.5px;top:599.5px" width="22" height="22" viewBox="0 0 22 22"><g stroke="#C8861C" stroke-width="1"><rect x="-3.6" y="-10.5" width="7.2" height="21" rx="3.6" transform="translate(11 11) rotate(45)" fill="#F0A830"/><rect x="-3.6" y="-10.5" width="7.2" height="21" rx="3.6" transform="translate(11 11) rotate(-45)" fill="#F0A830"/></g><rect x="-3" y="-3" width="6" height="6" transform="translate(11 11) rotate(45)" fill="#F8C868"/></svg>
<svg class="abs" style="left:137.5px;top:599.5px" width="22" height="22" viewBox="0 0 22 22"><path d="M3 7 L20 5 L21 19 L5 21Z" fill="#4A6CC0" stroke="#2A4288" stroke-width="0.9"/><circle cx="8" cy="3.5" r="2.4" fill="#fff" stroke="#D85828" stroke-width="1"/><path d="M7 5.8 H9 V9 H7Z" fill="#fff" stroke="#D85828" stroke-width="0.8"/><rect x="2" y="9" width="12" height="6.5" rx="1" fill="#F8ECE0" stroke="#D85828" stroke-width="1.1"/><path d="M3.5 13.5 H12.5" stroke="#333" stroke-width="0.9"/></svg>
<svg class="abs" style="left:9.5px;top:631.4px" width="22" height="22" viewBox="0 0 22 22"><path d="M11 2.5 Q17.5 11.5 17.5 14.5 A6.5 6.5 0 0 1 4.5 14.5 Q4.5 11.5 11 2.5Z" fill="#8CB4E8" stroke="#5A84C0" stroke-width="1"/><path d="M7 14 Q7 11 10 7" stroke="#D0E4FA" stroke-width="1.3" fill="none"/></svg>
<svg class="abs" style="left:40.4px;top:631.4px" width="22" height="22" viewBox="0 0 22 22"><path d="M4 8 Q8 2 14 3 Q19 5 17 10 Q19 14 14 16 L9 20 L5 19 L7 14 Q2 13 4 8Z" fill="#F4E8E0" stroke="#D85828" stroke-width="1.1"/><path d="M8 9 Q11 6 13 9 M9 13 L13 11 M8 16 L11 14" stroke="#D85828" stroke-width="0.9" fill="none"/><path d="M10 12 L8 18" stroke="#B83018" stroke-width="1.6"/></svg>
<svg class="abs" style="left:72.7px;top:631.4px" width="22" height="22" viewBox="0 0 22 22"><path d="M12 10 L20 2" stroke="#333" stroke-width="2.6"/><circle cx="8.5" cy="13.5" r="6" fill="#2A2A38" stroke="#111" stroke-width="0.6"/><circle cx="6.5" cy="11.5" r="1.8" fill="#3A7A5A" opacity="0.9"/></svg>
<div class="abs" style="left:73px;top:676px;width:38px;height:28px;background:#fff;border:1px solid #E8E6DA;border-right:2px solid #111;border-bottom:2px solid #111"></div>
<div class="abs" style="left:57px;top:662px;width:38px;height:27px;background:#000;border:1px solid #444"></div>
<svg class="abs" style="left:98px;top:661px" width="14" height="14" viewBox="0 0 14 14"><path d="M2 4.5 H9 V11" fill="none" stroke="#777" stroke-width="2.4"/><path d="M2 4.5 H9 V11" fill="none" stroke="#fff" stroke-width="1"/><path d="M0.5 4.5 L4 1.5 V7.5Z M9 13.5 L6 10 H12Z" fill="#fff" stroke="#777" stroke-width="0.8"/></svg>
<div class="abs" style="left:63px;top:697px;width:7px;height:7px;background:#fff;border:1px solid #555"></div>
<div class="abs" style="left:58px;top:692px;width:7px;height:7px;background:#000;border:1px solid #555"></div>
<div class="abs" style="left:4px;top:706px;width:160px;height:1px;background:#C8C4B4"></div>
<div class="abs" style="left:4px;top:707px;width:160px;height:2px;background:#F8F7F2"></div>
<div class="abs" style="left:4px;top:710px;width:160px;height:1px;background:#D8D4C4"></div>
<div class="t" style="left:6.0px;top:717.5px;font-size:11px;font-weight:bold;transform:scaleX(0.9225);transform-origin:0 0">Paintbrush</div>
<div class="abs" style="left:146px;top:718px;width:11px;height:11px;border:1px solid #5A6E82;border-radius:2px;background:#fff"></div>
<svg class="abs" style="left:148px;top:720px" width="6" height="7" viewBox="0 0 6 7"><path d="M5.5 0.5 L0.5 3.5 L5.5 6.5Z" fill="#5A6E82"/></svg>
<div class="abs" style="left:44px;top:734px;width:117px;height:8px;background:#fff;border:1px solid #7F9DB9"></div>
<div class="abs" style="left:144px;top:735px;width:16px;height:6px;background:#C4D4FA"></div>


<!-- TASKBAR -->
<div class="abs" style="left:0;top:738px;width:1024px;height:30px;background:linear-gradient(#2C6EE8 0%,#3C88F4 4%,#2A66E4 12%,#245CDC 30%,#2358D8 70%,#2052CC 92%,#1C46B4 100%)"></div>
<div class="abs" style="left:0;top:738px;width:96px;height:30px;border-radius:0 12px 14px 0 / 0 14px 16px 0;background:linear-gradient(#3F8E3F 0%,#6AB464 6%,#4A9E48 16%,#3C903C 40%,#3A8C3A 70%,#347E34 90%,#2A6A2A 100%);box-shadow:1px 0 2px rgba(0,0,40,0.5)"></div>
<svg class="abs" style="left:10px;top:744px" width="19" height="17" viewBox="0 0 19 17"><g transform="skewX(-8)"><path d="M4 1 Q7 -0.5 10 1.5 L9 8 Q6 6.5 3 8Z" fill="#E8582C"/><path d="M11 1.8 Q14 3.5 17.5 1.5 L16.5 8 Q13 10 10 8.2Z" fill="#7CC04C"/><path d="M2.8 9 Q6 7.5 8.8 9.2 L7.8 15.5 Q5 14 1.8 15.5Z" fill="#4C88E8"/><path d="M9.8 9.5 Q13 11.2 16.3 9.2 L15.3 15.5 Q12 17.5 8.8 15.8Z" fill="#F8C830"/></g></svg>
<div class="t" style="left:34.3px;top:742.8px;font-size:19px;font-weight:bold;font-style:italic;color:#fff;text-shadow:1px 1px 1px #1E4A1E;transform:scaleX(0.9080);transform-origin:0 0">start</div>
<div class="abs" style="left:107px;top:741px;width:153px;height:25px;border-radius:3px;background:linear-gradient(#5496FA 0%,#3C84F4 12%,#3A80F0 80%,#3474E4 100%);box-shadow:inset -1px -1px 0 #2C62D0"></div>
<svg class="abs" style="left:116px;top:745px" width="16" height="14" viewBox="0 0 16 14"><path d="M1 2.5 Q1 1 2.5 1 H6 L7.5 3 H14 Q15 3 15 4 V12 Q15 13 14 13 H2 Q1 13 1 12Z" fill="#F8D878" stroke="#B88820" stroke-width="0.9"/><path d="M1.5 5.5 H14.5 V12 Q14.5 12.5 14 12.5 H2 Q1.5 12.5 1.5 12Z" fill="#FCE8A0"/></svg>
<div class="t" style="left:135.0px;top:746.5px;font-size:11px;color:#F8B848;font-weight:bold;transform:scaleX(0.9796);transform-origin:0 0">3</div>
<div class="t" style="left:146.3px;top:746.5px;font-size:11px;color:#fff;transform:scaleX(0.9522);transform-origin:0 0">Windows Explorer</div>
<svg class="abs" style="left:251px;top:751px" width="7" height="4" viewBox="0 0 7 4"><path d="M0 0 H7 L3.5 4Z" fill="#fff"/></svg>
<div class="abs" style="left:264px;top:741px;width:151px;height:25px;border-radius:3px;background:linear-gradient(#5496FA 0%,#3C84F4 12%,#3A80F0 80%,#3474E4 100%);box-shadow:inset -1px -1px 0 #2C62D0"></div>
<svg class="abs" style="left:272px;top:745px" width="14" height="14" viewBox="0 0 14 14"><rect x="0.5" y="0.5" width="13" height="13" fill="#fff" stroke="#1A2A78" stroke-width="1"/><rect x="2" y="2" width="10" height="10" fill="#1E3A98"/><path d="M3.5 4 L5 10 L7 5.5 L9 10 L10.5 4" fill="none" stroke="#fff" stroke-width="1.3"/></svg>
<div class="t" style="left:290.0px;top:746.5px;font-size:11px;color:#fff;transform:scaleX(0.9828);transform-origin:0 0">Microsoft Word</div>
<div class="abs" style="left:418px;top:741px;width:151px;height:25px;border-radius:3px;background:linear-gradient(#5496FA 0%,#3C84F4 12%,#3A80F0 80%,#3474E4 100%);box-shadow:inset -1px -1px 0 #2C62D0"></div>
<svg class="abs" style="left:427px;top:745px" width="14" height="15" viewBox="0 0 14 15"><path d="M3 1 H12 V13 H3Z" fill="#E8F0FC" stroke="#6A88B8" stroke-width="0.9"/><path d="M1 3 Q3 2 3 4 V12 Q3 14 1 13" fill="#A8C0E8" stroke="#6A88B8" stroke-width="0.8"/><path d="M5 4 H10 M5 6.5 H10 M5 9 H10" stroke="#88A8D8" stroke-width="0.9"/></svg>
<div class="t" style="left:445.0px;top:746.5px;font-size:11px;color:#fff;transform:scaleX(0.9438);transform-origin:0 0">PLRlicense - Notepad</div>
<div class="abs" style="left:572px;top:741px;width:152px;height:25px;border-radius:3px;background:linear-gradient(#5496FA 0%,#3C84F4 12%,#3A80F0 80%,#3474E4 100%);box-shadow:inset -1px -1px 0 #2C62D0"></div>
<svg class="abs" style="left:582px;top:745px" width="15" height="14" viewBox="0 0 15 14"><rect x="1.5" y="1" width="12" height="8.5" fill="#E8E8E0" stroke="#333" stroke-width="1"/><rect x="3.5" y="2.8" width="8" height="4.8" fill="#4A6A4A"/><path d="M4 6.5 L6 4.5 L8 6 L11 3.5" stroke="#9AE89A" stroke-width="0.8" fill="none"/><path d="M0.5 12.5 L2 10 H13 L14.5 12.5Z" fill="#D8D8D0" stroke="#333" stroke-width="0.8"/></svg>
<div class="t" style="left:601.0px;top:746.5px;font-size:11px;color:#fff;transform:scaleX(0.9741);transform-origin:0 0">Windows Task Mana...</div>
<div class="abs" style="left:727px;top:741px;width:155px;height:25px;border-radius:3px;background:linear-gradient(#1A48A8,#1E52B8 20%,#2058C0);box-shadow:inset 1px 1px 1px #123A90"></div>
<div class="abs" style="left:738px;top:745px;width:13px;height:14px;background:#1A0604;overflow:hidden"><div class="abs" style="left:1px;top:1px;width:12px;height:8px;background:radial-gradient(ellipse at 50% 70%,#FFD070 0%,#F08018 40%,#8A3010 100%)"></div><div class="abs" style="left:0;top:0;width:4px;height:9px;background:#3A1A10"></div></div>
<div class="t" style="left:757.0px;top:746.5px;font-size:11px;color:#fff;transform:scaleX(0.9635);transform-origin:0 0">*BanishFears_PBack...</div>
<div class="abs" style="left:895px;top:738px;width:129px;height:30px;background:linear-gradient(#1290E8 0%,#18A8F8 5%,#149CF0 14%,#1094E8 50%,#0F8CE0 85%,#0C78C8 100%);border-left:1px solid #0A4CA8;box-shadow:inset 1px 0 0 #38B0F8"></div>
<div class="abs" style="left:888px;top:745px;width:15px;height:15px;border-radius:8px;background:radial-gradient(circle at 40% 35%,#6AB8FC,#2A78E0 70%,#1858C0);border:1px solid #A8D4FC"></div>
<svg class="abs" style="left:892px;top:748px" width="6" height="9" viewBox="0 0 6 9"><path d="M5 1 L1.5 4.5 L5 8" stroke="#fff" stroke-width="1.8" fill="none"/></svg>
<div class="abs" style="left:906px;top:745px;width:16px;height:14px;background:#2A3A30;opacity:.55"></div>
<svg class="abs" style="left:906px;top:744px" width="18" height="17" viewBox="0 0 18 17"><path d="M3 9 L1 5 L3 4.5 L4.5 7 L4.5 2 L6.5 1.5 L7 6 L8 1 L10 1 L10 6 L11.5 1.8 L13.5 2.3 L12.5 7 L15 4 L16.5 5 L13.5 11 L12.5 15.5 H5.5Z" fill="#F8C820" stroke="#7A5A08" stroke-width="0.9"/></svg>
<div class="abs" style="left:928px;top:747px;width:11px;height:11px;background:#0A0A0A;border:1px solid #D8D8C8"></div>
<svg class="abs" style="left:942px;top:744px" width="17" height="16" viewBox="0 0 17 16"><rect x="6" y="1" width="9" height="7" fill="#B8D0F0" stroke="#2A3A68" stroke-width="1"/><rect x="7.5" y="2.5" width="6" height="4" fill="#3A68C8"/><rect x="1.5" y="6" width="9" height="7" fill="#C8D8F0" stroke="#2A3A68" stroke-width="1"/><rect x="3" y="7.5" width="6" height="4" fill="#4A78D8"/><path d="M3 15 H9 M9 10 H14" stroke="#2A3A68" stroke-width="1"/></svg>
<div class="t" style="left:968.0px;top:746.5px;font-size:11px;color:#fff;transform:scaleX(0.9663);transform-origin:0 0">8:44 AM</div>

</div>
</body>
</html>
